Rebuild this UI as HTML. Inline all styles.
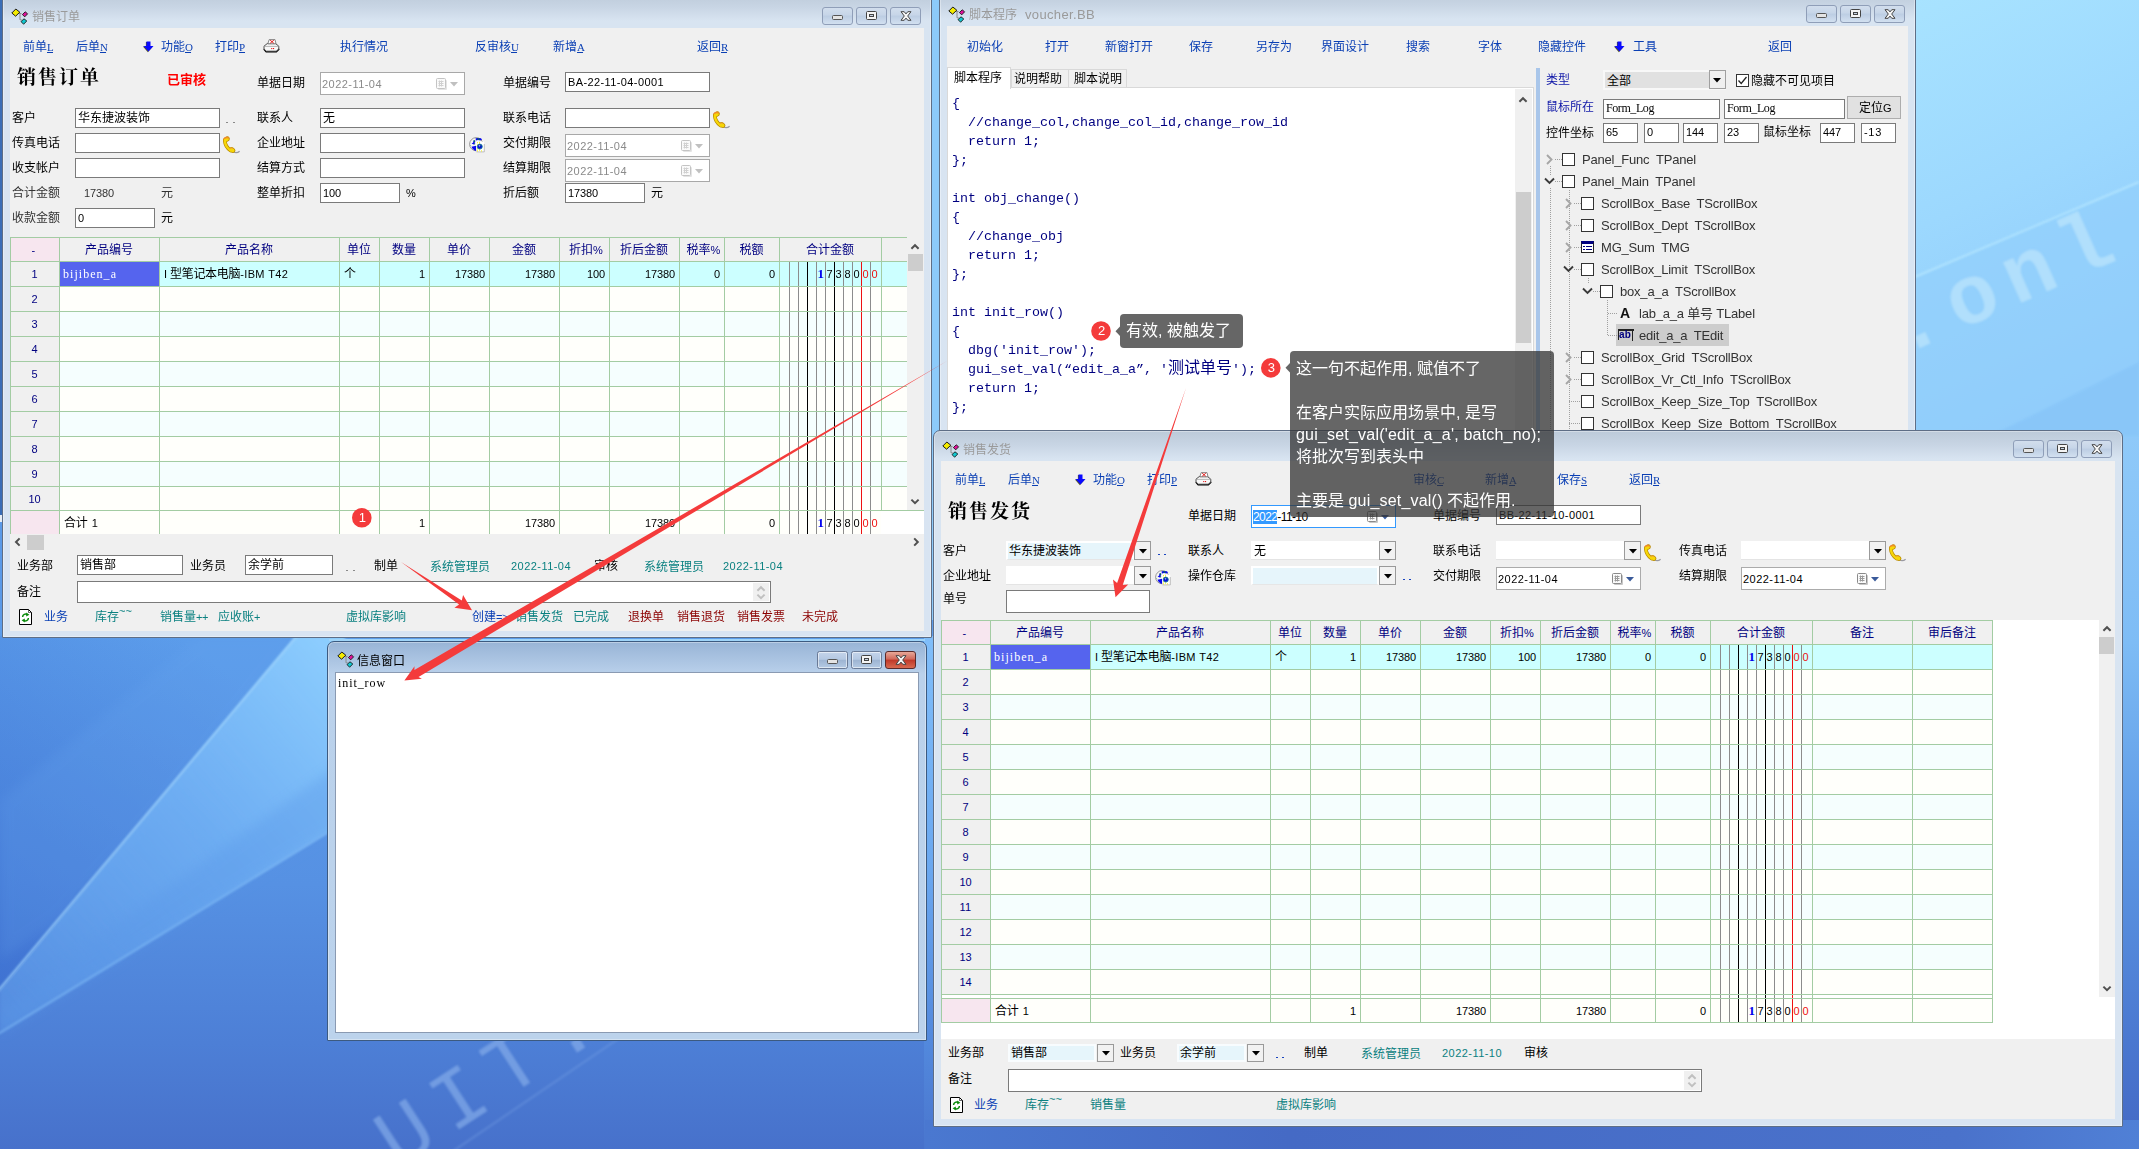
<!DOCTYPE html><html lang="zh"><head><meta charset="utf-8"><title>desktop</title><style>
*{box-sizing:border-box;margin:0;padding:0}
html,body{width:2139px;height:1149px;overflow:hidden}
body{position:relative;font-family:"Liberation Sans","Noto Sans CJK SC",sans-serif;font-size:12px;color:#000;
 background:#5b98e6}
div,svg,span.a{position:absolute}
.t{white-space:nowrap;font-size:12px}
.b{color:#0a3fb4}           /* toolbar blue */
.lb{color:#1018a8}
.n{color:#000080}           /* navy */
.g{color:#0a8080}           /* teal */
.r{color:#8b0000}           /* dark red */
.gy{color:#9a9a9a}
.in{background:#fff;border:1px solid #7a7a7a}
.din{background:#fff;border:1px solid #a0a0a0}
.cb{background:#fff}
.cbb{background:#f2f2f2;border:1px solid #a8a8a8}
.hl{background:#a3cca3;height:1px}
.vl{background:#a3cca3;width:1px}
.mono{font-family:"Liberation Mono","Noto Sans CJK SC",monospace}
.ser{font-family:"Liberation Serif","Noto Serif CJK SC",serif}
.seg{font-family:"Liberation Sans","Noto Sans CJK SC",sans-serif;font-size:13px;color:#333;letter-spacing:-0.2px}
.wbtn{border:1px solid #8c9bb4;border-radius:3px;background:linear-gradient(#d6e2f0,#c3d2e6 45%,#b9cbe2 50%,#cfdff0)}
</style></head><body>
<svg width="2139" height="1149" viewBox="0 0 2139 1149" style="left:0;top:0">
<defs>
<linearGradient id="bgl" x1="0" y1="0" x2="0" y2="1">
<stop offset="0" stop-color="#5c9deb"/><stop offset="0.5" stop-color="#5691e3"/><stop offset="0.8" stop-color="#4d7fd6"/><stop offset="1" stop-color="#4771cb"/>
</linearGradient>
<linearGradient id="dk" x1="0.6" y1="0" x2="0" y2="1">
<stop offset="0" stop-color="#3466cc" stop-opacity="0"/><stop offset="1" stop-color="#3466cc" stop-opacity="0.6"/>
</linearGradient>
<linearGradient id="wedge" x1="1" y1="0" x2="0" y2="1">
<stop offset="0" stop-color="#8fd0ff" stop-opacity="1"/><stop offset="0.45" stop-color="#74b4f6" stop-opacity="0.75"/><stop offset="1" stop-color="#62a2ee" stop-opacity="0.3"/>
</linearGradient>
<linearGradient id="rs" x1="0" y1="0" x2="0" y2="1">
<stop offset="0" stop-color="#90caf9"/><stop offset="0.3" stop-color="#7ebcf5"/><stop offset="0.55" stop-color="#5f9be6"/><stop offset="0.85" stop-color="#4a78d0"/><stop offset="1" stop-color="#4468c4"/>
</linearGradient>
<linearGradient id="ms" x1="0" y1="0" x2="0" y2="1"><stop offset="0" stop-color="#80befa"/><stop offset="0.45" stop-color="#6aa8f0"/><stop offset="0.8" stop-color="#5288dc"/><stop offset="1" stop-color="#4a76ce"/></linearGradient>
<linearGradient id="rt" x1="0" y1="0" x2="0.25" y2="1">
<stop offset="0" stop-color="#a8e3ff"/><stop offset="0.5" stop-color="#9cd8fe"/><stop offset="1" stop-color="#8dc9fa"/>
</linearGradient>
<linearGradient id="bs" x1="0" y1="0" x2="1" y2="0">
<stop offset="0" stop-color="#4a78d0"/><stop offset="0.3" stop-color="#456ac5"/><stop offset="0.85" stop-color="#4a72cb"/><stop offset="1" stop-color="#5080d6"/>
</linearGradient>
<filter id="b6" x="-20%" y="-20%" width="140%" height="140%"><feGaussianBlur stdDeviation="6"/></filter>
<filter id="b2" x="-20%" y="-20%" width="140%" height="140%"><feGaussianBlur stdDeviation="1.6"/></filter>
<filter id="b1"><feGaussianBlur stdDeviation="1.2"/></filter>
</defs>
<rect width="2139" height="1149" fill="#5b98e6"/>
<rect x="0" y="0" width="2139" height="640" fill="#8ccafa"/>
<rect x="0" y="0" width="4" height="515" fill="#3a6db6"/><rect x="0" y="515" width="4" height="7" fill="#e6edf5"/><rect x="0" y="522" width="4" height="118" fill="#5a9ae8"/>
<rect x="0" y="620" width="945" height="529" fill="url(#bgl)"/>
<polygon points="0,636 297,636 0,991" fill="url(#dk)"/>
<polygon points="200,636 300,636 170,800 60,920 0,960 0,800" fill="#6aa8f0" opacity="0.18" filter="url(#b6)"/>
<polygon points="296,636 345,636 345,822 0,1034 0,990" fill="url(#wedge)" filter="url(#b2)"/>
<polygon points="345,760 345,822 0,1034 0,1010" fill="#5a98e8" opacity="0.35" filter="url(#b6)"/>
<line x1="297" y1="636" x2="-2" y2="991" stroke="#a8dcff" stroke-width="2" opacity="0.75" filter="url(#b1)"/>
<line x1="345" y1="822" x2="-2" y2="1034" stroke="#8cc6fb" stroke-width="2" opacity="0.5" filter="url(#b1)"/>
<rect x="2118" y="425" width="21" height="724" fill="url(#rs)"/>
<rect x="924" y="636" width="12" height="513" fill="url(#ms)"/>
<rect x="925" y="1120" width="1214" height="29" fill="url(#bs)"/>
<rect x="1910" y="0" width="229" height="436" fill="url(#rt)"/>
<polygon points="1910,279 2139,182 2139,436 1910,436" fill="#93d0fc" opacity="0.7" filter="url(#b1)"/>
<polygon points="1990,436 2139,362 2139,436" fill="#86c4f8" opacity="0.7" filter="url(#b1)"/>
<line x1="1910" y1="279" x2="2139" y2="182" stroke="#b8e8ff" stroke-width="2" opacity="0.8" filter="url(#b1)"/>
<line x1="640" y1="1024" x2="440" y2="1160" stroke="#86aeea" stroke-width="2.5" opacity="0.25" filter="url(#b1)"/>
<g filter="url(#b1)" font-family="Liberation Mono,monospace" font-weight="bold">
<text x="0" y="0" transform="translate(1902,356) rotate(-24)" font-size="84" fill="#c4e8fc" opacity="0.62" letter-spacing="12">.onl y</text>
<text x="0" y="0" transform="translate(398,1169) rotate(-33)" font-size="84" font-weight="normal" fill="#84ace8" opacity="0.7" letter-spacing="14">UIT.</text>
</g>
</svg>
<div style="left:2px;top:-8px;width:930px;height:646px;z-index:1;background:linear-gradient(#bccad9,#c8d5e4 14px,#d8e4f1 28px,#d8e4f2);border:1px solid #5e6e86;border-radius:7px 7px 1px 1px;box-shadow:0 0 0 1px rgba(255,255,255,.35) inset"></div>
<div id="w1" style="left:0;top:0;width:2139px;height:1149px;z-index:2">
<div style="left:10px;top:28px;width:914px;height:603px;background:#f0f0f0"></div>
<svg style="left:11px;top:8px" width="18" height="18" viewBox="0 0 18 18">
<path d="M8 5.5 H10.5 M9 5.5 V11.8 H10.6" fill="none" stroke="#8a8a8a" stroke-width="1"/>
<path d="M0.8 5 L4.8 1 L8.8 4.2 L4.6 8.2Z" fill="#f4ec00" stroke="#1a1a1a" stroke-width="1"/>
<path d="M11.4 6.6 L14.2 3.8 L16.6 5.8 L13.8 8.8Z" fill="#e0109a" stroke="#1a1a1a" stroke-width="0.9"/>
<path d="M10 13.6 L13 10.8 L15.8 13 L12.6 16.2Z" fill="#10c8d0" stroke="#1a1a1a" stroke-width="0.9"/>
</svg>
<div class="t gy" style="left:32px;top:8.5px;line-height:16px;font-size:12px">销售订单</div>
<div style="left:822px;top:7px;width:31px;height:18px;border:1px solid #8f9eb8;border-radius:3px;background:linear-gradient(#d2deed,#c6d5e8 45%,#bccde3 50%,#d2e0f0)"><div style="left:9px;top:7px;width:11px;height:5px;border:1px solid #555;border-radius:1.5px;background:#e4e4e4"></div></div>
<div style="left:856px;top:7px;width:31px;height:18px;border:1px solid #8f9eb8;border-radius:3px;background:linear-gradient(#d2deed,#c6d5e8 45%,#bccde3 50%,#d2e0f0)"><div style="left:9px;top:3px;width:11px;height:9px;border:1px solid #444;border-radius:1.5px;background:#f4f4f4"></div><div style="left:12px;top:6px;width:5px;height:3px;border:1px solid #444;background:#c8d4e4"></div></div>
<div style="left:890px;top:7px;width:31px;height:18px;border:1px solid #8f9eb8;border-radius:3px;background:linear-gradient(#d2deed,#c6d5e8 45%,#bccde3 50%,#d2e0f0)"><svg style="left:9px;top:3px" width="12" height="10" viewBox="0 0 12 10"><path d="M1 0.7 L4.2 0.7 L6 2.9 L7.8 0.7 L11 0.7 L7.7 5 L11 9.3 L7.8 9.3 L6 7.1 L4.2 9.3 L1 9.3 L4.3 5Z" fill="#f6f6f6" stroke="#444" stroke-width="1"/></svg></div>
<div class="t b" style="left:23px;top:38.5px;line-height:16px;">前单<u class="ser" style="font-size:11px"><span style="letter-spacing:-0.72px">L</span></u></div>
<div class="t b" style="left:76px;top:38.5px;line-height:16px;">后单<u class="ser" style="font-size:11px"><span style="letter-spacing:-1.94px">N</span></u></div>
<div class="t b" style="left:161px;top:38.5px;line-height:16px;">功能<u class="ser" style="font-size:11px"><span style="letter-spacing:-1.94px">O</span></u></div>
<div class="t b" style="left:215px;top:38.5px;line-height:16px;">打印<u class="ser" style="font-size:11px"><span style="letter-spacing:-0.12px">P</span></u></div>
<div class="t b" style="left:340px;top:38.5px;line-height:16px;">执行情况</div>
<div class="t b" style="left:475px;top:38.5px;line-height:16px;">反审核<u class="ser" style="font-size:11px"><span style="letter-spacing:-1.94px">U</span></u></div>
<div class="t b" style="left:553px;top:38.5px;line-height:16px;">新增<u class="ser" style="font-size:11px"><span style="letter-spacing:-1.94px">A</span></u></div>
<div class="t b" style="left:697px;top:38.5px;line-height:16px;">返回<u class="ser" style="font-size:11px"><span style="letter-spacing:-1.34px">R</span></u></div>
<svg style="left:142px;top:41px" width="12" height="13" viewBox="-1 0 12 13"><path d="M3.5 0.5 H7.5 V5 H10.5 L5.5 10.6 L0.5 5 H3.5Z" fill="#55552a" transform="translate(-0.6,0.6)"/><path d="M3.5 0.5 H7.5 V5 H10.5 L5.5 10.6 L0.5 5 H3.5Z" fill="#0a0aff"/></svg>
<svg style="left:263px;top:39px" width="17" height="14" viewBox="0 0 17 14">
<path d="M1 9.8 L3.4 12.6 H13.2 L16 9.8" fill="none" stroke="#000" stroke-width="2" stroke-linejoin="round"/>
<path d="M4.2 4.6 H12.6 L15.8 7.2 V10 L13.2 12.2 H3.4 L1 10 V7.2Z" fill="#f8f8f8" stroke="#3a3a3a" stroke-width="0.9" stroke-linejoin="round"/>
<path d="M1.4 7.4 H15.4" stroke="#9a9a9a" stroke-width="0.7"/>
<path d="M6.2 0.6 H12 L13 4.8 H4.8Z" fill="#fff" stroke="#6a6a6a" stroke-width="0.8"/>
<path d="M7.2 1.2 L10.8 4.2 M10.8 1.2 L7.2 4.2" stroke="#e01818" stroke-width="1"/>
<rect x="8.2" y="9" width="1.1" height="1.1" fill="#e01818"/><rect x="10" y="9" width="1.1" height="1.1" fill="#e01818"/>
</svg>
<div class="t ser" style="left:17px;top:65px;line-height:26px;font-size:19px;font-weight:bold;letter-spacing:2px">销售订单</div>
<div class="t" style="left:167px;top:72px;line-height:16px;color:#f00;font-weight:bold;font-size:13px">已审核</div>
<div class="t" style="left:12px;top:110px;line-height:16px;color:#000">客户</div>
<div class="t" style="left:12px;top:135px;line-height:16px;color:#000">传真电话</div>
<div class="t" style="left:12px;top:160px;line-height:16px;color:#000">收支帐户</div>
<div class="t" style="left:12px;top:185px;line-height:16px;color:#333">合计金额</div>
<div class="t" style="left:12px;top:210px;line-height:16px;color:#333">收款金额</div>
<div class="t" style="left:257px;top:75px;line-height:16px;">单据日期</div>
<div class="t" style="left:257px;top:110px;line-height:16px;">联系人</div>
<div class="t" style="left:257px;top:135px;line-height:16px;">企业地址</div>
<div class="t" style="left:257px;top:160px;line-height:16px;">结算方式</div>
<div class="t" style="left:257px;top:185px;line-height:16px;">整单折扣</div>
<div class="t" style="left:503px;top:75px;line-height:16px;">单据编号</div>
<div class="t" style="left:503px;top:110px;line-height:16px;">联系电话</div>
<div class="t" style="left:503px;top:135px;line-height:16px;">交付期限</div>
<div class="t" style="left:503px;top:160px;line-height:16px;">结算期限</div>
<div class="t" style="left:503px;top:185px;line-height:16px;">折后额</div>
<div class="in" style="left:75px;top:108px;width:145px;height:20px;"></div>
<div class="t" style="left:78px;top:110px;line-height:16px;">华东捷波装饰</div>
<div class="in" style="left:75px;top:133px;width:145px;height:20px;"></div>
<div class="in" style="left:75px;top:158px;width:145px;height:20px;"></div>
<div class="t" style="left:84px;top:185px;line-height:16px;color:#333;letter-spacing:-0.6px"><span style="font-size:11px;letter-spacing:-0.12px">17380</span></div>
<div class="t" style="left:161px;top:185px;line-height:16px;color:#333">元</div>
<div class="in" style="left:75px;top:208px;width:80px;height:20px;"></div>
<div class="t" style="left:78px;top:210px;line-height:16px;"><span style="font-size:11px;letter-spacing:-0.12px">0</span></div>
<div class="t" style="left:161px;top:210px;line-height:16px;">元</div>
<div style="left:226px;top:122px;width:2px;height:1px;background:#8a8a8a"></div>
<div style="left:233px;top:122px;width:2px;height:1px;background:#8a8a8a"></div>
<svg style="left:222px;top:135.5px" width="19" height="18" viewBox="0 0 19 18">
<path d="M11.5 16 Q14.8 17.8 17.6 15.2" fill="none" stroke="#9a9aa2" stroke-width="1.2"/>
<path d="M2.8 5 Q3.2 10.5 8.6 14.6" fill="none" stroke="#b88a00" stroke-width="3.6" stroke-linecap="round"/>
<ellipse cx="4.4" cy="3.4" rx="3.5" ry="2.6" transform="rotate(-32 4.4 3.4)" fill="#b88a00"/>
<ellipse cx="10.2" cy="14" rx="3.3" ry="2.6" transform="rotate(38 10.2 14)" fill="#b88a00"/>
<path d="M2.8 5 Q3.2 10.5 8.6 14.6" fill="none" stroke="#f7d708" stroke-width="2.3" stroke-linecap="round"/>
<ellipse cx="4.4" cy="3.4" rx="2.8" ry="1.9" transform="rotate(-32 4.4 3.4)" fill="#f7d708"/>
<ellipse cx="10.2" cy="14" rx="2.6" ry="1.9" transform="rotate(38 10.2 14)" fill="#f7d708"/>
<path d="M2.2 2.6 Q4.4 0.8 6.6 2" fill="none" stroke="#f08a28" stroke-width="1.3" stroke-linecap="round"/>
<path d="M8.2 12.2 Q9.6 11.6 10.8 12.4" fill="none" stroke="#f0a030" stroke-width="1" stroke-linecap="round"/>
</svg>
<div style="left:320px;top:72px;width:145px;height:23px;background:#fff;border:1px solid #a8a8a8"></div>
<div class="t" style="left:322px;top:75.5px;line-height:16px;color:#8a8a8a;letter-spacing:-0.6px"><span style="font-size:11px;letter-spacing:0.45px">2022-11-04</span></div>
<svg style="left:436px;top:77.5px" width="12" height="13" viewBox="0 0 12 13"><rect x="2" y="2" width="9" height="10" rx="1" fill="#e4e4e4"/><rect x="0.5" y="0.5" width="9" height="10" rx="1" fill="#fafafa" stroke="#c4c4c4"/><path d="M2.5 3.5 H7.5 M2.5 5.5 H7.5 M2.5 7.5 H7.5 M3.5 2.5 V8.5 M5.5 2.5 V8.5" stroke="#d0d0d0" stroke-width="1" fill="none"/></svg>
<svg style="left:450px;top:81.5px" width="8" height="5"><path d="M0 0 H8 L4 4.5Z" fill="#c0c0c0"/></svg>
<div class="in" style="left:320px;top:108px;width:145px;height:20px;"></div>
<div class="t" style="left:323px;top:110px;line-height:16px;">无</div>
<div class="in" style="left:320px;top:133px;width:145px;height:20px;"></div>
<div class="in" style="left:320px;top:158px;width:145px;height:20px;"></div>
<div class="in" style="left:320px;top:183px;width:80px;height:20px;"></div>
<div class="t" style="left:323px;top:185px;line-height:16px;"><span style="font-size:11px;letter-spacing:-0.12px">100</span></div>
<div class="t" style="left:406px;top:185px;line-height:16px;"><span style="font-size:11px;letter-spacing:-3.78px">%</span></div>
<svg style="left:469px;top:137px" width="16" height="16" viewBox="0 0 16 16">
<circle cx="7.2" cy="7.2" r="6.6" fill="#f6f6f6" stroke="#8c8c8c" stroke-width="0.9"/>
<path d="M6.5 1.6 L8 0.9 L12 1.2 L13 2.8 L11.5 3.6 L9 3 L7 3.4Z" fill="#0a0aee"/>
<path d="M8.2 1.6 L10.6 1.4 L10.2 2.8 L8.6 2.6Z" fill="#0a8a2a"/>
<path d="M4.4 3.6 L6.2 3.2 L6.2 5 L5.4 6.2 L6.2 7 L4.6 7.4 L2.6 6.6 L4.2 5.6Z" fill="#0a0aee"/>
<path d="M4.6 3.6 L6 3.4 L6 4.8 L4.8 5Z M5.2 6.4 L6.2 6.4 L6 7.2 L5 7.2Z" fill="#0a8a2a"/>
<path d="M1.2 8.2 L2.2 8.6 L1.8 9.2Z" fill="#109090"/>
<path d="M2.4 9.8 L7.2 8.8 L7.2 14 L5.6 13.6 L3.6 11.8Z" fill="#0a0aee"/>
<rect x="7.4" y="4.6" width="7.8" height="10.2" fill="#ffffff"/>
<path d="M7.4 14.9 H15.3 V7" fill="none" stroke="#b0b0b0" stroke-width="0.8"/>
<g fill="#f6f000"><rect x="8" y="5.2" width="1" height="1"/><rect x="10" y="4.8" width="1" height="1"/><rect x="10" y="6.4" width="1" height="1"/><rect x="8" y="7.4" width="1" height="1"/><rect x="8" y="11.4" width="1" height="1"/><rect x="8" y="13.4" width="1" height="1"/><rect x="10" y="12.6" width="1" height="1"/><rect x="12" y="13.4" width="1" height="1"/></g>
<circle cx="10.8" cy="9.6" r="2.5" fill="#0a0ae0" stroke="#108888" stroke-width="0.8"/>
<path d="M9.6 8.6 L11.4 8.2 L10.4 9.8Z" fill="#f4f4f4"/><path d="M10.6 9.4 L12 8.2 L12.2 9Z" fill="#0a8a2a"/>
</svg>
<div class="in" style="left:565px;top:72px;width:145px;height:20px;"></div>
<div class="t" style="left:568px;top:74px;line-height:16px;"><span style="font-size:11px;letter-spacing:0.39px">BA-22-11-04-0001</span></div>
<div class="in" style="left:565px;top:108px;width:145px;height:20px;"></div>
<svg style="left:712px;top:110.5px" width="19" height="18" viewBox="0 0 19 18">
<path d="M11.5 16 Q14.8 17.8 17.6 15.2" fill="none" stroke="#9a9aa2" stroke-width="1.2"/>
<path d="M2.8 5 Q3.2 10.5 8.6 14.6" fill="none" stroke="#b88a00" stroke-width="3.6" stroke-linecap="round"/>
<ellipse cx="4.4" cy="3.4" rx="3.5" ry="2.6" transform="rotate(-32 4.4 3.4)" fill="#b88a00"/>
<ellipse cx="10.2" cy="14" rx="3.3" ry="2.6" transform="rotate(38 10.2 14)" fill="#b88a00"/>
<path d="M2.8 5 Q3.2 10.5 8.6 14.6" fill="none" stroke="#f7d708" stroke-width="2.3" stroke-linecap="round"/>
<ellipse cx="4.4" cy="3.4" rx="2.8" ry="1.9" transform="rotate(-32 4.4 3.4)" fill="#f7d708"/>
<ellipse cx="10.2" cy="14" rx="2.6" ry="1.9" transform="rotate(38 10.2 14)" fill="#f7d708"/>
<path d="M2.2 2.6 Q4.4 0.8 6.6 2" fill="none" stroke="#f08a28" stroke-width="1.3" stroke-linecap="round"/>
<path d="M8.2 12.2 Q9.6 11.6 10.8 12.4" fill="none" stroke="#f0a030" stroke-width="1" stroke-linecap="round"/>
</svg>
<div style="left:565px;top:134px;width:145px;height:23px;background:#fff;border:1px solid #a8a8a8"></div>
<div class="t" style="left:567px;top:137.5px;line-height:16px;color:#8a8a8a;letter-spacing:-0.6px"><span style="font-size:11px;letter-spacing:0.45px">2022-11-04</span></div>
<svg style="left:681px;top:139.5px" width="12" height="13" viewBox="0 0 12 13"><rect x="2" y="2" width="9" height="10" rx="1" fill="#e4e4e4"/><rect x="0.5" y="0.5" width="9" height="10" rx="1" fill="#fafafa" stroke="#c4c4c4"/><path d="M2.5 3.5 H7.5 M2.5 5.5 H7.5 M2.5 7.5 H7.5 M3.5 2.5 V8.5 M5.5 2.5 V8.5" stroke="#d0d0d0" stroke-width="1" fill="none"/></svg>
<svg style="left:695px;top:143.5px" width="8" height="5"><path d="M0 0 H8 L4 4.5Z" fill="#c0c0c0"/></svg>
<div style="left:565px;top:159px;width:145px;height:23px;background:#fff;border:1px solid #a8a8a8"></div>
<div class="t" style="left:567px;top:162.5px;line-height:16px;color:#8a8a8a;letter-spacing:-0.6px"><span style="font-size:11px;letter-spacing:0.45px">2022-11-04</span></div>
<svg style="left:681px;top:164.5px" width="12" height="13" viewBox="0 0 12 13"><rect x="2" y="2" width="9" height="10" rx="1" fill="#e4e4e4"/><rect x="0.5" y="0.5" width="9" height="10" rx="1" fill="#fafafa" stroke="#c4c4c4"/><path d="M2.5 3.5 H7.5 M2.5 5.5 H7.5 M2.5 7.5 H7.5 M3.5 2.5 V8.5 M5.5 2.5 V8.5" stroke="#d0d0d0" stroke-width="1" fill="none"/></svg>
<svg style="left:695px;top:168.5px" width="8" height="5"><path d="M0 0 H8 L4 4.5Z" fill="#c0c0c0"/></svg>
<div class="in" style="left:565px;top:183px;width:80px;height:20px;"></div>
<div class="t" style="left:568px;top:185px;line-height:16px;"><span style="font-size:11px;letter-spacing:-0.12px">17380</span></div>
<div class="t" style="left:651px;top:185px;line-height:16px;">元</div>
<div style="left:10px;top:228px;width:914px;height:324px;background:#f0f0f0"></div>
<div style="left:10px;top:237px;width:897px;height:24px;background:#f0f0f0"></div>
<div style="left:10px;top:237px;width:49px;height:24px;background:#f7e6ef"></div>
<div style="left:59px;top:261px;width:848px;height:25px;background:#ccffff"></div>
<div style="left:10px;top:261px;width:49px;height:25px;background:#f0f0f0"></div>
<div class="t n" style="left:10px;top:266px;line-height:16px;width:49px;text-align:center;letter-spacing:-0.5px"><span style="font-size:11px;letter-spacing:-0.12px">1</span></div>
<div style="left:59px;top:286px;width:848px;height:25px;background:#fffffb"></div>
<div style="left:10px;top:286px;width:49px;height:25px;background:#f0f0f0"></div>
<div class="t n" style="left:10px;top:291px;line-height:16px;width:49px;text-align:center;letter-spacing:-0.5px"><span style="font-size:11px;letter-spacing:-0.12px">2</span></div>
<div style="left:59px;top:311px;width:848px;height:25px;background:#f5fefe"></div>
<div style="left:10px;top:311px;width:49px;height:25px;background:#f0f0f0"></div>
<div class="t n" style="left:10px;top:316px;line-height:16px;width:49px;text-align:center;letter-spacing:-0.5px"><span style="font-size:11px;letter-spacing:-0.12px">3</span></div>
<div style="left:59px;top:336px;width:848px;height:25px;background:#fffffb"></div>
<div style="left:10px;top:336px;width:49px;height:25px;background:#f0f0f0"></div>
<div class="t n" style="left:10px;top:341px;line-height:16px;width:49px;text-align:center;letter-spacing:-0.5px"><span style="font-size:11px;letter-spacing:-0.12px">4</span></div>
<div style="left:59px;top:361px;width:848px;height:25px;background:#f5fefe"></div>
<div style="left:10px;top:361px;width:49px;height:25px;background:#f0f0f0"></div>
<div class="t n" style="left:10px;top:366px;line-height:16px;width:49px;text-align:center;letter-spacing:-0.5px"><span style="font-size:11px;letter-spacing:-0.12px">5</span></div>
<div style="left:59px;top:386px;width:848px;height:25px;background:#fffffb"></div>
<div style="left:10px;top:386px;width:49px;height:25px;background:#f0f0f0"></div>
<div class="t n" style="left:10px;top:391px;line-height:16px;width:49px;text-align:center;letter-spacing:-0.5px"><span style="font-size:11px;letter-spacing:-0.12px">6</span></div>
<div style="left:59px;top:411px;width:848px;height:25px;background:#f5fefe"></div>
<div style="left:10px;top:411px;width:49px;height:25px;background:#f0f0f0"></div>
<div class="t n" style="left:10px;top:416px;line-height:16px;width:49px;text-align:center;letter-spacing:-0.5px"><span style="font-size:11px;letter-spacing:-0.12px">7</span></div>
<div style="left:59px;top:436px;width:848px;height:25px;background:#fffffb"></div>
<div style="left:10px;top:436px;width:49px;height:25px;background:#f0f0f0"></div>
<div class="t n" style="left:10px;top:441px;line-height:16px;width:49px;text-align:center;letter-spacing:-0.5px"><span style="font-size:11px;letter-spacing:-0.12px">8</span></div>
<div style="left:59px;top:461px;width:848px;height:25px;background:#f5fefe"></div>
<div style="left:10px;top:461px;width:49px;height:25px;background:#f0f0f0"></div>
<div class="t n" style="left:10px;top:466px;line-height:16px;width:49px;text-align:center;letter-spacing:-0.5px"><span style="font-size:11px;letter-spacing:-0.12px">9</span></div>
<div style="left:59px;top:486px;width:848px;height:25px;background:#fffffb"></div>
<div style="left:10px;top:486px;width:49px;height:25px;background:#f0f0f0"></div>
<div class="t n" style="left:10px;top:491px;line-height:16px;width:49px;text-align:center;letter-spacing:-0.5px"><span style="font-size:11px;letter-spacing:-0.12px">10</span></div>
<div style="left:59px;top:510px;width:848px;height:24px;background:#fffffb"></div>
<div style="left:10px;top:510px;width:49px;height:24px;background:#f7e6ef"></div>
<div style="left:60px;top:262px;width:99px;height:24px;background:#5564ee"></div>
<div class="t n" style="left:10px;top:241.5px;line-height:16px;width:49px;text-align:center;"><span style="font-size:11px;letter-spacing:2.34px">-</span></div>
<div class="t n" style="left:59px;top:241.5px;line-height:16px;width:100px;text-align:center;">产品编号</div>
<div class="t n" style="left:159px;top:241.5px;line-height:16px;width:180px;text-align:center;">产品名称</div>
<div class="t n" style="left:339px;top:241.5px;line-height:16px;width:40px;text-align:center;">单位</div>
<div class="t n" style="left:379px;top:241.5px;line-height:16px;width:50px;text-align:center;">数量</div>
<div class="t n" style="left:429px;top:241.5px;line-height:16px;width:60px;text-align:center;">单价</div>
<div class="t n" style="left:489px;top:241.5px;line-height:16px;width:70px;text-align:center;">金额</div>
<div class="t n" style="left:559px;top:241.5px;line-height:16px;width:50px;text-align:center;">折扣<span style="font-size:11px;letter-spacing:-3.78px">%</span></div>
<div class="t n" style="left:609px;top:241.5px;line-height:16px;width:70px;text-align:center;">折后金额</div>
<div class="t n" style="left:679px;top:241.5px;line-height:16px;width:45px;text-align:center;">税率<span style="font-size:11px;letter-spacing:-3.78px">%</span></div>
<div class="t n" style="left:724px;top:241.5px;line-height:16px;width:55px;text-align:center;">税额</div>
<div class="t n" style="left:779px;top:241.5px;line-height:16px;width:102px;text-align:center;">合计金额</div>
<div style="left:789px;top:261px;width:1px;height:250px;background:#8c8c8c"></div>
<div style="left:789px;top:510px;width:1px;height:24px;background:#8c8c8c"></div>
<div style="left:798px;top:261px;width:1px;height:250px;background:#8c8c8c"></div>
<div style="left:798px;top:510px;width:1px;height:24px;background:#8c8c8c"></div>
<div style="left:807px;top:261px;width:1px;height:250px;background:#000"></div>
<div style="left:807px;top:510px;width:1px;height:24px;background:#000"></div>
<div style="left:816px;top:261px;width:1px;height:250px;background:#8c8c8c"></div>
<div style="left:816px;top:510px;width:1px;height:24px;background:#8c8c8c"></div>
<div style="left:825px;top:261px;width:1px;height:250px;background:#8c8c8c"></div>
<div style="left:825px;top:510px;width:1px;height:24px;background:#8c8c8c"></div>
<div style="left:834px;top:261px;width:1px;height:250px;background:#000"></div>
<div style="left:834px;top:510px;width:1px;height:24px;background:#000"></div>
<div style="left:843px;top:261px;width:1px;height:250px;background:#8c8c8c"></div>
<div style="left:843px;top:510px;width:1px;height:24px;background:#8c8c8c"></div>
<div style="left:852px;top:261px;width:1px;height:250px;background:#8c8c8c"></div>
<div style="left:852px;top:510px;width:1px;height:24px;background:#8c8c8c"></div>
<div style="left:861px;top:261px;width:1px;height:250px;background:#ee1111"></div>
<div style="left:861px;top:510px;width:1px;height:24px;background:#ee1111"></div>
<div style="left:870px;top:261px;width:1px;height:250px;background:#8c8c8c"></div>
<div style="left:870px;top:510px;width:1px;height:24px;background:#8c8c8c"></div>
<div class="hl" style="left:10px;top:237px;width:897px"></div>
<div class="hl" style="left:10px;top:261px;width:897px"></div>
<div class="hl" style="left:10px;top:286px;width:897px"></div>
<div class="hl" style="left:10px;top:311px;width:897px"></div>
<div class="hl" style="left:10px;top:336px;width:897px"></div>
<div class="hl" style="left:10px;top:361px;width:897px"></div>
<div class="hl" style="left:10px;top:386px;width:897px"></div>
<div class="hl" style="left:10px;top:411px;width:897px"></div>
<div class="hl" style="left:10px;top:436px;width:897px"></div>
<div class="hl" style="left:10px;top:461px;width:897px"></div>
<div class="hl" style="left:10px;top:486px;width:897px"></div>
<div class="hl" style="left:10px;top:510px;width:897px"></div>
<div class="vl" style="left:10px;top:237px;height:297px"></div>
<div class="vl" style="left:59px;top:237px;height:297px"></div>
<div class="vl" style="left:159px;top:237px;height:297px"></div>
<div class="vl" style="left:339px;top:237px;height:297px"></div>
<div class="vl" style="left:379px;top:237px;height:297px"></div>
<div class="vl" style="left:429px;top:237px;height:297px"></div>
<div class="vl" style="left:489px;top:237px;height:297px"></div>
<div class="vl" style="left:559px;top:237px;height:297px"></div>
<div class="vl" style="left:609px;top:237px;height:297px"></div>
<div class="vl" style="left:679px;top:237px;height:297px"></div>
<div class="vl" style="left:724px;top:237px;height:297px"></div>
<div class="vl" style="left:779px;top:237px;height:297px"></div>
<div class="vl" style="left:881px;top:237px;height:297px"></div>
<div class="t ser" style="left:63px;top:266px;line-height:16px;color:#fff;letter-spacing:0.35px;font-size:12px"><span style="letter-spacing:1.04px">bijiben_a</span></div>
<div class="t" style="left:164px;top:266px;line-height:16px;letter-spacing:-0.3px"><span style="font-size:11px;letter-spacing:2.94px">I</span>型笔记本电脑<span style="font-size:11px;letter-spacing:0.37px">-IBM T42</span></div>
<div class="t" style="left:344px;top:266px;line-height:16px;letter-spacing:-0.3px">个</div>
<div class="t" style="left:379px;top:266px;line-height:16px;width:50px;text-align:right;letter-spacing:-0.6px;padding-right:4px"><span style="font-size:11px;letter-spacing:-0.12px">1</span></div>
<div class="t" style="left:429px;top:266px;line-height:16px;width:60px;text-align:right;letter-spacing:-0.6px;padding-right:4px"><span style="font-size:11px;letter-spacing:-0.12px">17380</span></div>
<div class="t" style="left:489px;top:266px;line-height:16px;width:70px;text-align:right;letter-spacing:-0.6px;padding-right:4px"><span style="font-size:11px;letter-spacing:-0.12px">17380</span></div>
<div class="t" style="left:559px;top:266px;line-height:16px;width:50px;text-align:right;letter-spacing:-0.6px;padding-right:4px"><span style="font-size:11px;letter-spacing:-0.12px">100</span></div>
<div class="t" style="left:609px;top:266px;line-height:16px;width:70px;text-align:right;letter-spacing:-0.6px;padding-right:4px"><span style="font-size:11px;letter-spacing:-0.12px">17380</span></div>
<div class="t" style="left:679px;top:266px;line-height:16px;width:45px;text-align:right;letter-spacing:-0.6px;padding-right:4px"><span style="font-size:11px;letter-spacing:-0.12px">0</span></div>
<div class="t" style="left:724px;top:266px;line-height:16px;width:55px;text-align:right;letter-spacing:-0.6px;padding-right:4px"><span style="font-size:11px;letter-spacing:-0.12px">0</span></div>
<div class="t ser" style="left:816px;top:266px;line-height:16px;width:9px;text-align:center;color:#0000ee;font-weight:bold;font-size:13px"><span style="letter-spacing:-0.50px">1</span></div>
<div class="t" style="left:825px;top:266px;line-height:16px;width:9px;text-align:center;color:#000;font-weight:normal;font-size:12px"><span style="font-size:11px;letter-spacing:-0.12px">7</span></div>
<div class="t" style="left:834px;top:266px;line-height:16px;width:9px;text-align:center;color:#000;font-weight:normal;font-size:12px"><span style="font-size:11px;letter-spacing:-0.12px">3</span></div>
<div class="t" style="left:843px;top:266px;line-height:16px;width:9px;text-align:center;color:#000;font-weight:normal;font-size:12px"><span style="font-size:11px;letter-spacing:-0.12px">8</span></div>
<div class="t" style="left:852px;top:266px;line-height:16px;width:9px;text-align:center;color:#000;font-weight:normal;font-size:12px"><span style="font-size:11px;letter-spacing:-0.12px">0</span></div>
<div class="t" style="left:861px;top:266px;line-height:16px;width:9px;text-align:center;color:#ee1111;font-weight:normal;font-size:12px"><span style="font-size:11px;letter-spacing:-0.12px">0</span></div>
<div class="t" style="left:870px;top:266px;line-height:16px;width:9px;text-align:center;color:#ee1111;font-weight:normal;font-size:12px"><span style="font-size:11px;letter-spacing:-0.12px">0</span></div>
<div class="t" style="left:64px;top:514.5px;line-height:16px;letter-spacing:-0.3px">合计<span style="font-size:11px;letter-spacing:1.41px"> 1</span></div>
<div class="t" style="left:379px;top:514.5px;line-height:16px;width:50px;text-align:right;letter-spacing:-0.6px;padding-right:4px"><span style="font-size:11px;letter-spacing:-0.12px">1</span></div>
<div class="t" style="left:489px;top:514.5px;line-height:16px;width:70px;text-align:right;letter-spacing:-0.6px;padding-right:4px"><span style="font-size:11px;letter-spacing:-0.12px">17380</span></div>
<div class="t" style="left:609px;top:514.5px;line-height:16px;width:70px;text-align:right;letter-spacing:-0.6px;padding-right:4px"><span style="font-size:11px;letter-spacing:-0.12px">17380</span></div>
<div class="t" style="left:724px;top:514.5px;line-height:16px;width:55px;text-align:right;letter-spacing:-0.6px;padding-right:4px"><span style="font-size:11px;letter-spacing:-0.12px">0</span></div>
<div class="t ser" style="left:816px;top:514.5px;line-height:16px;width:9px;text-align:center;color:#0000ee;font-weight:bold;font-size:13px"><span style="letter-spacing:-0.50px">1</span></div>
<div class="t" style="left:825px;top:514.5px;line-height:16px;width:9px;text-align:center;color:#000;font-weight:normal;font-size:12px"><span style="font-size:11px;letter-spacing:-0.12px">7</span></div>
<div class="t" style="left:834px;top:514.5px;line-height:16px;width:9px;text-align:center;color:#000;font-weight:normal;font-size:12px"><span style="font-size:11px;letter-spacing:-0.12px">3</span></div>
<div class="t" style="left:843px;top:514.5px;line-height:16px;width:9px;text-align:center;color:#000;font-weight:normal;font-size:12px"><span style="font-size:11px;letter-spacing:-0.12px">8</span></div>
<div class="t" style="left:852px;top:514.5px;line-height:16px;width:9px;text-align:center;color:#000;font-weight:normal;font-size:12px"><span style="font-size:11px;letter-spacing:-0.12px">0</span></div>
<div class="t" style="left:861px;top:514.5px;line-height:16px;width:9px;text-align:center;color:#ee1111;font-weight:normal;font-size:12px"><span style="font-size:11px;letter-spacing:-0.12px">0</span></div>
<div class="t" style="left:870px;top:514.5px;line-height:16px;width:9px;text-align:center;color:#ee1111;font-weight:normal;font-size:12px"><span style="font-size:11px;letter-spacing:-0.12px">0</span></div>
<div style="left:881px;top:511px;width:43px;height:23px;background:#fff"></div>
<div style="left:881px;top:510px;width:43px;height:1px;background:#a3cca3"></div>
<div style="left:10px;top:534px;width:914px;height:18px;background:#f0f0f0"></div>
<div style="left:907px;top:237px;width:17px;height:273px;background:#f0f0f0"></div>
<svg style="left:910px;top:242px" width="10" height="10"><path d="M1.4 6.8 L5 3.2 L8.6 6.8" fill="none" stroke="#505050" stroke-width="2"/></svg>
<svg style="left:910px;top:497px" width="10" height="10"><path d="M1.4 2.6 L5 6.2 L8.6 2.6" fill="none" stroke="#505050" stroke-width="2"/></svg>
<div style="left:908px;top:254px;width:15px;height:17px;background:#cdcdcd"></div>
<svg style="left:13px;top:537px" width="10" height="10"><path d="M6.6 1.4 L3 5 L6.6 8.6" fill="none" stroke="#505050" stroke-width="2"/></svg>
<svg style="left:911px;top:537px" width="10" height="10"><path d="M3.2 1.4 L6.8 5 L3.2 8.6" fill="none" stroke="#505050" stroke-width="2"/></svg>
<div style="left:27px;top:535px;width:17px;height:15px;background:#cdcdcd"></div>
<div class="t" style="left:17px;top:558px;line-height:16px;">业务部</div>
<div class="in" style="left:77px;top:555px;width:106px;height:20px;"></div>
<div class="t" style="left:80px;top:557px;line-height:16px;">销售部</div>
<div class="t" style="left:190px;top:558px;line-height:16px;">业务员</div>
<div class="in" style="left:245px;top:555px;width:88px;height:20px;"></div>
<div class="t" style="left:248px;top:557px;line-height:16px;">余学前</div>
<div style="left:346px;top:570px;width:2px;height:1px;background:#8a8a8a"></div>
<div style="left:353px;top:570px;width:2px;height:1px;background:#8a8a8a"></div>
<div class="t" style="left:374px;top:558px;line-height:16px;">制单</div>
<div class="t g" style="left:430px;top:558.5px;line-height:16px;">系统管理员</div>
<div class="t g" style="left:511px;top:558px;line-height:16px;"><span style="font-size:11px;letter-spacing:0.45px">2022-11-04</span></div>
<div class="t" style="left:594px;top:558px;line-height:16px;">审核</div>
<div class="t g" style="left:644px;top:558.5px;line-height:16px;">系统管理员</div>
<div class="t g" style="left:723px;top:558px;line-height:16px;"><span style="font-size:11px;letter-spacing:0.45px">2022-11-04</span></div>
<div class="t" style="left:17px;top:584px;line-height:16px;">备注</div>
<div style="left:77px;top:581px;width:694px;height:22px;background:#fff;border:1px solid #7a7a7a"></div>
<div style="left:753px;top:583px;width:16px;height:18px;background:#f0f0f0"></div>
<svg style="left:756px;top:584px" width="10" height="10"><path d="M1.4 6.8 L5 3.2 L8.6 6.8" fill="none" stroke="#c0c0c0" stroke-width="2"/></svg>
<svg style="left:756px;top:592px" width="10" height="10"><path d="M1.4 2.6 L5 6.2 L8.6 2.6" fill="none" stroke="#c0c0c0" stroke-width="2"/></svg>
<svg style="left:19px;top:609px" width="14" height="17" viewBox="0 0 14 17">
<path d="M0.5 0.5 H9.5 L12.5 3.5 V15.5 H0.5Z" fill="#fff" stroke="#000" stroke-width="1"/>
<path d="M9.5 0.5 V3.5 H12.5" fill="none" stroke="#000" stroke-width="0.6"/>
<path d="M3.6 8 A3 3 0 0 1 8.4 5.6 M9.4 9 A3 3 0 0 1 4.6 11.4" fill="none" stroke="#0a8a0a" stroke-width="1.5"/>
<path d="M7.2 3.6 L10.4 5.8 L7.2 7.6Z M5.8 9.4 L2.6 11.2 L5.8 13.4Z" fill="#0a8a0a"/>
</svg>
<div class="t b" style="left:44px;top:608.5px;line-height:16px;">业务</div>
<div class="t g" style="left:95px;top:608.5px;line-height:16px;">库存<span style="position:relative;top:-6px;font-size:11px">~~</span></div>
<div class="t g" style="left:160px;top:608.5px;line-height:16px;">销售量<span style="font-size:11px;letter-spacing:-0.42px">++</span></div>
<div class="t g" style="left:218px;top:608.5px;line-height:16px;">应收账<span style="font-size:11px;letter-spacing:-0.42px">+</span></div>
<div class="t g" style="left:346px;top:608.5px;line-height:16px;">虚拟库影响</div>
<div class="t b" style="left:472px;top:608.5px;line-height:16px;">创建<span style="font-size:11px;letter-spacing:-0.42px">=&gt;</span></div>
<div class="t g" style="left:515px;top:608.5px;line-height:16px;">销售发货</div>
<div class="t g" style="left:573px;top:608.5px;line-height:16px;">已完成</div>
<div class="t r" style="left:628px;top:608.5px;line-height:16px;">退换单</div>
<div class="t r" style="left:677px;top:608.5px;line-height:16px;">销售退货</div>
<div class="t r" style="left:737px;top:608.5px;line-height:16px;">销售发票</div>
<div class="t r" style="left:802px;top:608.5px;line-height:16px;">未完成</div>
</div>
<div style="left:939px;top:-10px;width:977px;height:710px;z-index:3;background:linear-gradient(#bccad9,#c8d5e4 14px,#d8e4f1 28px,#d8e4f2);border:1px solid #5e6e86;border-radius:7px 7px 1px 1px;box-shadow:0 0 0 1px rgba(255,255,255,.35) inset"></div>
<div id="w2" style="left:0;top:0;width:2139px;height:1149px;z-index:4">
<div style="left:947px;top:26px;width:961px;height:614px;background:#f0f0f0"></div>
<svg style="left:948px;top:6px" width="18" height="18" viewBox="0 0 18 18">
<path d="M8 5.5 H10.5 M9 5.5 V11.8 H10.6" fill="none" stroke="#8a8a8a" stroke-width="1"/>
<path d="M0.8 5 L4.8 1 L8.8 4.2 L4.6 8.2Z" fill="#f4ec00" stroke="#1a1a1a" stroke-width="1"/>
<path d="M11.4 6.6 L14.2 3.8 L16.6 5.8 L13.8 8.8Z" fill="#e0109a" stroke="#1a1a1a" stroke-width="0.9"/>
<path d="M10 13.6 L13 10.8 L15.8 13 L12.6 16.2Z" fill="#10c8d0" stroke="#1a1a1a" stroke-width="0.9"/>
</svg>
<div class="t gy" style="left:969px;top:6.5px;line-height:16px;">脚本程序</div>
<div class="t gy" style="left:1025px;top:6.5px;line-height:16px;font-size:13px;letter-spacing:0.35px">voucher.BB</div>
<div style="left:1806px;top:5px;width:31px;height:18px;border:1px solid #8f9eb8;border-radius:3px;background:linear-gradient(#d2deed,#c6d5e8 45%,#bccde3 50%,#d2e0f0)"><div style="left:9px;top:7px;width:11px;height:5px;border:1px solid #555;border-radius:1.5px;background:#e4e4e4"></div></div>
<div style="left:1840px;top:5px;width:31px;height:18px;border:1px solid #8f9eb8;border-radius:3px;background:linear-gradient(#d2deed,#c6d5e8 45%,#bccde3 50%,#d2e0f0)"><div style="left:9px;top:3px;width:11px;height:9px;border:1px solid #444;border-radius:1.5px;background:#f4f4f4"></div><div style="left:12px;top:6px;width:5px;height:3px;border:1px solid #444;background:#c8d4e4"></div></div>
<div style="left:1874px;top:5px;width:31px;height:18px;border:1px solid #8f9eb8;border-radius:3px;background:linear-gradient(#d2deed,#c6d5e8 45%,#bccde3 50%,#d2e0f0)"><svg style="left:9px;top:3px" width="12" height="10" viewBox="0 0 12 10"><path d="M1 0.7 L4.2 0.7 L6 2.9 L7.8 0.7 L11 0.7 L7.7 5 L11 9.3 L7.8 9.3 L6 7.1 L4.2 9.3 L1 9.3 L4.3 5Z" fill="#f6f6f6" stroke="#444" stroke-width="1"/></svg></div>
<div class="t b" style="left:967px;top:38.5px;line-height:16px;">初始化</div>
<div class="t b" style="left:1045px;top:38.5px;line-height:16px;">打开</div>
<div class="t b" style="left:1105px;top:38.5px;line-height:16px;">新窗打开</div>
<div class="t b" style="left:1189px;top:38.5px;line-height:16px;">保存</div>
<div class="t b" style="left:1256px;top:38.5px;line-height:16px;">另存为</div>
<div class="t b" style="left:1321px;top:38.5px;line-height:16px;">界面设计</div>
<div class="t b" style="left:1406px;top:38.5px;line-height:16px;">搜索</div>
<div class="t b" style="left:1478px;top:38.5px;line-height:16px;">字体</div>
<div class="t b" style="left:1538px;top:38.5px;line-height:16px;">隐藏控件</div>
<div class="t b" style="left:1633px;top:38.5px;line-height:16px;">工具</div>
<div class="t b" style="left:1768px;top:38.5px;line-height:16px;">返回</div>
<svg style="left:1613px;top:41px" width="12" height="13" viewBox="-1 0 12 13"><path d="M3.5 0.5 H7.5 V5 H10.5 L5.5 10.6 L0.5 5 H3.5Z" fill="#55552a" transform="translate(-0.6,0.6)"/><path d="M3.5 0.5 H7.5 V5 H10.5 L5.5 10.6 L0.5 5 H3.5Z" fill="#0a0aff"/></svg>
<div style="left:947px;top:87px;width:587px;height:553px;background:#fff;border:1px solid #d9d9d9"></div>
<div style="left:1011px;top:69px;width:58px;height:19px;background:#f0f0f0;border:1px solid #d9d9d9"></div>
<div style="left:1068px;top:69px;width:59px;height:19px;background:#f0f0f0;border:1px solid #d9d9d9"></div>
<div style="left:947px;top:67px;width:64px;height:22px;background:#fff;border:1px solid #d9d9d9;border-bottom:none"></div>
<div class="t" style="left:954px;top:69.5px;line-height:16px;">脚本程序</div>
<div class="t" style="left:1014px;top:71px;line-height:16px;">说明帮助</div>
<div class="t" style="left:1074px;top:71px;line-height:16px;">脚本说明</div>
<div class="t mono" style="left:952px;top:94px;line-height:19px;font-size:13.33px;color:#000080;white-space:pre">{</div>
<div class="t mono" style="left:952px;top:113px;line-height:19px;font-size:13.33px;color:#000080;white-space:pre">  //change_col,change_col_id,change_row_id</div>
<div class="t mono" style="left:952px;top:132px;line-height:19px;font-size:13.33px;color:#000080;white-space:pre">  return 1;</div>
<div class="t mono" style="left:952px;top:151px;line-height:19px;font-size:13.33px;color:#000080;white-space:pre">};</div>
<div class="t mono" style="left:952px;top:189px;line-height:19px;font-size:13.33px;color:#000080;white-space:pre">int obj_change()</div>
<div class="t mono" style="left:952px;top:208px;line-height:19px;font-size:13.33px;color:#000080;white-space:pre">{</div>
<div class="t mono" style="left:952px;top:227px;line-height:19px;font-size:13.33px;color:#000080;white-space:pre">  //change_obj</div>
<div class="t mono" style="left:952px;top:246px;line-height:19px;font-size:13.33px;color:#000080;white-space:pre">  return 1;</div>
<div class="t mono" style="left:952px;top:265px;line-height:19px;font-size:13.33px;color:#000080;white-space:pre">};</div>
<div class="t mono" style="left:952px;top:303px;line-height:19px;font-size:13.33px;color:#000080;white-space:pre">int init_row()</div>
<div class="t mono" style="left:952px;top:322px;line-height:19px;font-size:13.33px;color:#000080;white-space:pre">{</div>
<div class="t mono" style="left:952px;top:341px;line-height:19px;font-size:13.33px;color:#000080;white-space:pre">  dbg('init_row');</div>
<div class="t mono" style="left:952px;top:360px;line-height:19px;font-size:13.33px;color:#000080;white-space:pre">  gui_set_val(“edit_a_a”, '<span style="font-size:16px">测试单号</span>');</div>
<div class="t mono" style="left:952px;top:379px;line-height:19px;font-size:13.33px;color:#000080;white-space:pre">  return 1;</div>
<div class="t mono" style="left:952px;top:398px;line-height:19px;font-size:13.33px;color:#000080;white-space:pre">};</div>
<div style="left:1515px;top:89px;width:17px;height:551px;background:#f0f0f0"></div>
<svg style="left:1518px;top:95px" width="10" height="10"><path d="M1.4 6.8 L5 3.2 L8.6 6.8" fill="none" stroke="#505050" stroke-width="2"/></svg>
<div style="left:1516px;top:192px;width:15px;height:151px;background:#cdcdcd"></div>
<div style="left:1536px;top:68px;width:4px;height:572px;background:#a9c6ea"></div>
<div class="t lb" style="left:1546px;top:72px;line-height:16px;">类型</div>
<div style="left:1603px;top:70px;width:123px;height:20px;background:#e1e1e1;border:2px solid #f8f8f8"></div>
<div class="t" style="left:1607px;top:72.5px;line-height:16px;">全部</div>
<div style="left:1709px;top:70px;width:17px;height:19px;background:#f0f0f0;border:1px solid #a0a0a0"></div>
<svg style="left:1713px;top:78px" width="8" height="5"><path d="M0 0 H8 L4 4.5Z" fill="#000"/></svg>
<div style="left:1736px;top:74px;width:13px;height:13px;background:#fff;border:1px solid #333"></div>
<svg style="left:1737px;top:75px" width="11" height="11"><path d="M1.5 5.5 L4.2 8.5 L9.5 2" fill="none" stroke="#222" stroke-width="1.3"/></svg>
<div class="t" style="left:1751px;top:73px;line-height:16px;">隐藏不可见项目</div>
<div class="t lb" style="left:1546px;top:99px;line-height:16px;">鼠标所在</div>
<div class="in" style="left:1603px;top:99px;width:117px;height:20px;"></div>
<div class="t ser" style="left:1606px;top:100px;line-height:16px;font-size:12px"><span style="letter-spacing:-0.42px">Form_Log</span></div>
<div class="in" style="left:1724px;top:99px;width:121px;height:20px;"></div>
<div class="t ser" style="left:1727px;top:100px;line-height:16px;font-size:12px"><span style="letter-spacing:-0.42px">Form_Log</span></div>
<div style="left:1847px;top:96px;width:54px;height:23px;background:#e1e1e1;border:1px solid #adadad"></div>
<div class="t" style="left:1847px;top:99.5px;line-height:16px;width:54px;text-align:center;">定位<span style="font-size:11px;letter-spacing:-2.56px">G</span></div>
<div class="t" style="left:1546px;top:125px;line-height:16px;">控件坐标</div>
<div class="t" style="left:1763px;top:124px;line-height:16px;">鼠标坐标</div>
<div class="in" style="left:1603px;top:123px;width:35px;height:20px;"></div>
<div class="t" style="left:1606px;top:124px;line-height:16px;letter-spacing:-0.5px"><span style="font-size:11px;letter-spacing:-0.12px">65</span></div>
<div class="in" style="left:1644px;top:123px;width:35px;height:20px;"></div>
<div class="t" style="left:1647px;top:124px;line-height:16px;letter-spacing:-0.5px"><span style="font-size:11px;letter-spacing:-0.12px">0</span></div>
<div class="in" style="left:1683px;top:123px;width:35px;height:20px;"></div>
<div class="t" style="left:1686px;top:124px;line-height:16px;letter-spacing:-0.5px"><span style="font-size:11px;letter-spacing:-0.12px">144</span></div>
<div class="in" style="left:1724px;top:123px;width:35px;height:20px;"></div>
<div class="t" style="left:1727px;top:124px;line-height:16px;letter-spacing:-0.5px"><span style="font-size:11px;letter-spacing:-0.12px">23</span></div>
<div class="in" style="left:1820px;top:123px;width:35px;height:20px;"></div>
<div class="t" style="left:1823px;top:124px;line-height:16px;letter-spacing:-0.5px"><span style="font-size:11px;letter-spacing:-0.12px">447</span></div>
<div class="in" style="left:1861px;top:123px;width:35px;height:20px;"></div>
<div class="t" style="left:1864px;top:124px;line-height:16px;letter-spacing:-0.5px"><span style="font-size:11px;letter-spacing:0.70px">-13</span></div>
<div style="left:1550px;top:166px;width:1px;height:10px;background:repeating-linear-gradient(180deg,#a0a0a0 0 1px,transparent 1px 2px);width:1px"></div>
<div style="left:1550px;top:188px;width:1px;height:242px;background:repeating-linear-gradient(180deg,#a0a0a0 0 1px,transparent 1px 2px);width:1px"></div>
<div style="left:1569px;top:190px;width:1px;height:240px;background:repeating-linear-gradient(180deg,#a0a0a0 0 1px,transparent 1px 2px);width:1px"></div>
<div style="left:1588px;top:278px;width:1px;height:6px;background:repeating-linear-gradient(180deg,#a0a0a0 0 1px,transparent 1px 2px);width:1px"></div>
<div style="left:1607px;top:300px;width:1px;height:36px;background:repeating-linear-gradient(180deg,#a0a0a0 0 1px,transparent 1px 2px);width:1px"></div>
<svg style="left:1546px;top:154px" width="7" height="11"><path d="M1 1 L5.5 5.5 L1 10" fill="none" stroke="#a6a6a6" stroke-width="1.9"/></svg>
<div style="left:1555px;top:159px;width:7px;height:1px;background:repeating-linear-gradient(90deg,#a0a0a0 0 1px,transparent 1px 2px);height:1px"></div>
<div style="left:1562px;top:152.5px;width:13px;height:13.0px;background:#fff;border:1px solid #333"></div>
<div class="t seg" style="left:1582px;top:149.5px;line-height:20px;white-space:pre">Panel_Func  TPanel</div>
<svg style="left:1544px;top:177px" width="11" height="8"><path d="M1 1.5 L5.5 6 L10 1.5" fill="none" stroke="#3a3a3a" stroke-width="1.9"/></svg>
<div style="left:1555px;top:181px;width:7px;height:1px;background:repeating-linear-gradient(90deg,#a0a0a0 0 1px,transparent 1px 2px);height:1px"></div>
<div style="left:1562px;top:174.5px;width:13px;height:13.0px;background:#fff;border:1px solid #333"></div>
<div class="t seg" style="left:1582px;top:171.5px;line-height:20px;white-space:pre">Panel_Main  TPanel</div>
<svg style="left:1565px;top:198px" width="7" height="11"><path d="M1 1 L5.5 5.5 L1 10" fill="none" stroke="#a6a6a6" stroke-width="1.9"/></svg>
<div style="left:1574px;top:203px;width:7px;height:1px;background:repeating-linear-gradient(90deg,#a0a0a0 0 1px,transparent 1px 2px);height:1px"></div>
<div style="left:1581px;top:196.5px;width:13px;height:13.0px;background:#fff;border:1px solid #333"></div>
<div class="t seg" style="left:1601px;top:193.5px;line-height:20px;white-space:pre">ScrollBox_Base  TScrollBox</div>
<svg style="left:1565px;top:220px" width="7" height="11"><path d="M1 1 L5.5 5.5 L1 10" fill="none" stroke="#a6a6a6" stroke-width="1.9"/></svg>
<div style="left:1574px;top:225px;width:7px;height:1px;background:repeating-linear-gradient(90deg,#a0a0a0 0 1px,transparent 1px 2px);height:1px"></div>
<div style="left:1581px;top:218.5px;width:13px;height:13.0px;background:#fff;border:1px solid #333"></div>
<div class="t seg" style="left:1601px;top:215.5px;line-height:20px;white-space:pre">ScrollBox_Dept  TScrollBox</div>
<svg style="left:1565px;top:242px" width="7" height="11"><path d="M1 1 L5.5 5.5 L1 10" fill="none" stroke="#a6a6a6" stroke-width="1.9"/></svg>
<div style="left:1574px;top:247px;width:7px;height:1px;background:repeating-linear-gradient(90deg,#a0a0a0 0 1px,transparent 1px 2px);height:1px"></div>
<div style="left:1581px;top:241px;width:13px;height:12px;background:#fff;border:1px solid #222;border-top:3px solid #000080"></div>
<div style="left:1583px;top:246px;width:9px;height:5px;background:repeating-linear-gradient(180deg,#000080 0 1px,#fff 1px 2.5px)"></div>
<div style="left:1585px;top:244px;width:1px;height:8px;background:#fff"></div>
<div class="t seg" style="left:1601px;top:237.5px;line-height:20px;white-space:pre">MG_Sum  TMG</div>
<svg style="left:1563px;top:265px" width="11" height="8"><path d="M1 1.5 L5.5 6 L10 1.5" fill="none" stroke="#3a3a3a" stroke-width="1.9"/></svg>
<div style="left:1574px;top:269px;width:7px;height:1px;background:repeating-linear-gradient(90deg,#a0a0a0 0 1px,transparent 1px 2px);height:1px"></div>
<div style="left:1581px;top:262.5px;width:13px;height:13.0px;background:#fff;border:1px solid #333"></div>
<div class="t seg" style="left:1601px;top:259.5px;line-height:20px;white-space:pre">ScrollBox_Limit  TScrollBox</div>
<svg style="left:1582px;top:287px" width="11" height="8"><path d="M1 1.5 L5.5 6 L10 1.5" fill="none" stroke="#3a3a3a" stroke-width="1.9"/></svg>
<div style="left:1593px;top:291px;width:7px;height:1px;background:repeating-linear-gradient(90deg,#a0a0a0 0 1px,transparent 1px 2px);height:1px"></div>
<div style="left:1600px;top:284.5px;width:13px;height:13.0px;background:#fff;border:1px solid #333"></div>
<div class="t seg" style="left:1620px;top:281.5px;line-height:20px;white-space:pre">box_a_a  TScrollBox</div>
<div style="left:1608px;top:313px;width:10px;height:1px;background:repeating-linear-gradient(90deg,#a0a0a0 0 1px,transparent 1px 2px);height:1px"></div>
<div class="t" style="left:1620px;top:305px;line-height:16px;font-weight:bold;font-size:14px;color:#111">A</div>
<div class="t seg" style="left:1639px;top:303.5px;line-height:20px;white-space:pre">lab_a_a 单号 TLabel</div>
<div style="left:1616px;top:324px;width:113px;height:22px;background:#cdcdcd"></div>
<div style="left:1608px;top:335px;width:10px;height:1px;background:repeating-linear-gradient(90deg,#a0a0a0 0 1px,transparent 1px 2px);height:1px"></div>
<div style="left:1618px;top:329px;width:16px;height:11px;border-top:2px solid #222;border-left:1px solid #222"></div>
<div class="t" style="left:1619px;top:327px;line-height:16px;font-weight:bold;font-size:10px;color:#000080;letter-spacing:-0.5px"><span style="letter-spacing:0.16px">ab</span></div>
<div style="left:1632px;top:330px;width:1px;height:11px;background:#222"></div>
<div class="t seg" style="left:1639px;top:325.5px;line-height:20px;white-space:pre">edit_a_a  TEdit</div>
<svg style="left:1565px;top:352px" width="7" height="11"><path d="M1 1 L5.5 5.5 L1 10" fill="none" stroke="#a6a6a6" stroke-width="1.9"/></svg>
<div style="left:1574px;top:357px;width:7px;height:1px;background:repeating-linear-gradient(90deg,#a0a0a0 0 1px,transparent 1px 2px);height:1px"></div>
<div style="left:1581px;top:350.5px;width:13px;height:13.0px;background:#fff;border:1px solid #333"></div>
<div class="t seg" style="left:1601px;top:347.5px;line-height:20px;white-space:pre">ScrollBox_Grid  TScrollBox</div>
<svg style="left:1565px;top:374px" width="7" height="11"><path d="M1 1 L5.5 5.5 L1 10" fill="none" stroke="#a6a6a6" stroke-width="1.9"/></svg>
<div style="left:1574px;top:379px;width:7px;height:1px;background:repeating-linear-gradient(90deg,#a0a0a0 0 1px,transparent 1px 2px);height:1px"></div>
<div style="left:1581px;top:372.5px;width:13px;height:13.0px;background:#fff;border:1px solid #333"></div>
<div class="t seg" style="left:1601px;top:369.5px;line-height:20px;white-space:pre">ScrollBox_Vr_Ctl_Info  TScrollBox</div>
<div style="left:1569px;top:401px;width:12px;height:1px;background:repeating-linear-gradient(90deg,#a0a0a0 0 1px,transparent 1px 2px);height:1px"></div>
<div style="left:1581px;top:394.5px;width:13px;height:13.0px;background:#fff;border:1px solid #333"></div>
<div class="t seg" style="left:1601px;top:391.5px;line-height:20px;white-space:pre">ScrollBox_Keep_Size_Top  TScrollBox</div>
<div style="left:1569px;top:423px;width:12px;height:1px;background:repeating-linear-gradient(90deg,#a0a0a0 0 1px,transparent 1px 2px);height:1px"></div>
<div style="left:1581px;top:416.5px;width:13px;height:13.0px;background:#fff;border:1px solid #333"></div>
<div class="t seg" style="left:1601px;top:413.5px;line-height:20px;white-space:pre">ScrollBox_Keep_Size_Bottom  TScrollBox</div>
</div>
<div style="left:933px;top:430px;width:1190px;height:697px;z-index:5;background:linear-gradient(#bccad9,#c8d5e4 14px,#d8e4f1 28px,#d8e4f2);border:1px solid #5e6e86;border-radius:7px 7px 1px 1px;box-shadow:0 0 0 1px rgba(255,255,255,.35) inset"></div>
<div id="w3" style="left:0;top:0;width:2139px;height:1149px;z-index:6">
<div style="left:941px;top:461px;width:1174px;height:658px;background:#f0f0f0"></div>
<svg style="left:942px;top:441px" width="18" height="18" viewBox="0 0 18 18">
<path d="M8 5.5 H10.5 M9 5.5 V11.8 H10.6" fill="none" stroke="#8a8a8a" stroke-width="1"/>
<path d="M0.8 5 L4.8 1 L8.8 4.2 L4.6 8.2Z" fill="#f4ec00" stroke="#1a1a1a" stroke-width="1"/>
<path d="M11.4 6.6 L14.2 3.8 L16.6 5.8 L13.8 8.8Z" fill="#e0109a" stroke="#1a1a1a" stroke-width="0.9"/>
<path d="M10 13.6 L13 10.8 L15.8 13 L12.6 16.2Z" fill="#10c8d0" stroke="#1a1a1a" stroke-width="0.9"/>
</svg>
<div class="t gy" style="left:963px;top:441.5px;line-height:16px;">销售发货</div>
<div style="left:2013px;top:440px;width:31px;height:18px;border:1px solid #8f9eb8;border-radius:3px;background:linear-gradient(#d2deed,#c6d5e8 45%,#bccde3 50%,#d2e0f0)"><div style="left:9px;top:7px;width:11px;height:5px;border:1px solid #555;border-radius:1.5px;background:#e4e4e4"></div></div>
<div style="left:2047px;top:440px;width:31px;height:18px;border:1px solid #8f9eb8;border-radius:3px;background:linear-gradient(#d2deed,#c6d5e8 45%,#bccde3 50%,#d2e0f0)"><div style="left:9px;top:3px;width:11px;height:9px;border:1px solid #444;border-radius:1.5px;background:#f4f4f4"></div><div style="left:12px;top:6px;width:5px;height:3px;border:1px solid #444;background:#c8d4e4"></div></div>
<div style="left:2081px;top:440px;width:31px;height:18px;border:1px solid #8f9eb8;border-radius:3px;background:linear-gradient(#d2deed,#c6d5e8 45%,#bccde3 50%,#d2e0f0)"><svg style="left:9px;top:3px" width="12" height="10" viewBox="0 0 12 10"><path d="M1 0.7 L4.2 0.7 L6 2.9 L7.8 0.7 L11 0.7 L7.7 5 L11 9.3 L7.8 9.3 L6 7.1 L4.2 9.3 L1 9.3 L4.3 5Z" fill="#f6f6f6" stroke="#444" stroke-width="1"/></svg></div>
<div class="t b" style="left:955px;top:471.5px;line-height:16px;">前单<u class="ser" style="font-size:11px"><span style="letter-spacing:-0.72px">L</span></u></div>
<div class="t b" style="left:1008px;top:471.5px;line-height:16px;">后单<u class="ser" style="font-size:11px"><span style="letter-spacing:-1.94px">N</span></u></div>
<div class="t b" style="left:1093px;top:471.5px;line-height:16px;">功能<u class="ser" style="font-size:11px"><span style="letter-spacing:-1.94px">O</span></u></div>
<div class="t b" style="left:1147px;top:471.5px;line-height:16px;">打印<u class="ser" style="font-size:11px"><span style="letter-spacing:-0.12px">P</span></u></div>
<div class="t b" style="left:1413px;top:471.5px;line-height:16px;">审核<u class="ser" style="font-size:11px"><span style="letter-spacing:-1.34px">C</span></u></div>
<div class="t b" style="left:1485px;top:471.5px;line-height:16px;">新增<u class="ser" style="font-size:11px"><span style="letter-spacing:-1.94px">A</span></u></div>
<div class="t b" style="left:1557px;top:471.5px;line-height:16px;">保存<u class="ser" style="font-size:11px"><span style="letter-spacing:-0.12px">S</span></u></div>
<div class="t b" style="left:1629px;top:471.5px;line-height:16px;">返回<u class="ser" style="font-size:11px"><span style="letter-spacing:-1.34px">R</span></u></div>
<svg style="left:1074px;top:474px" width="12" height="13" viewBox="-1 0 12 13"><path d="M3.5 0.5 H7.5 V5 H10.5 L5.5 10.6 L0.5 5 H3.5Z" fill="#55552a" transform="translate(-0.6,0.6)"/><path d="M3.5 0.5 H7.5 V5 H10.5 L5.5 10.6 L0.5 5 H3.5Z" fill="#0a0aff"/></svg>
<svg style="left:1195px;top:472px" width="17" height="14" viewBox="0 0 17 14">
<path d="M1 9.8 L3.4 12.6 H13.2 L16 9.8" fill="none" stroke="#000" stroke-width="2" stroke-linejoin="round"/>
<path d="M4.2 4.6 H12.6 L15.8 7.2 V10 L13.2 12.2 H3.4 L1 10 V7.2Z" fill="#f8f8f8" stroke="#3a3a3a" stroke-width="0.9" stroke-linejoin="round"/>
<path d="M1.4 7.4 H15.4" stroke="#9a9a9a" stroke-width="0.7"/>
<path d="M6.2 0.6 H12 L13 4.8 H4.8Z" fill="#fff" stroke="#6a6a6a" stroke-width="0.8"/>
<path d="M7.2 1.2 L10.8 4.2 M10.8 1.2 L7.2 4.2" stroke="#e01818" stroke-width="1"/>
<rect x="8.2" y="9" width="1.1" height="1.1" fill="#e01818"/><rect x="10" y="9" width="1.1" height="1.1" fill="#e01818"/>
</svg>
<div class="t ser" style="left:948px;top:499px;line-height:26px;font-size:19px;font-weight:bold;letter-spacing:2px">销售发货</div>
<div class="t" style="left:1188px;top:508px;line-height:16px;">单据日期</div>
<div style="left:1251px;top:505px;width:145px;height:23px;background:#fff;border:1px solid #3399ff"></div>
<div class="t" style="left:1253px;top:508.5px;line-height:16px;color:#000;letter-spacing:-0.6px"><span style="background:#3399ff;color:#fff">2022</span>-11-10</div>
<svg style="left:1367px;top:510.5px" width="12" height="13" viewBox="0 0 12 13"><rect x="2" y="2" width="9" height="10" rx="1" fill="#c8c8c8"/><rect x="0.5" y="0.5" width="9" height="10" rx="1" fill="#fafafa" stroke="#8a8a8a"/><path d="M2.5 3.5 H7.5 M2.5 5.5 H7.5 M2.5 7.5 H7.5 M3.5 2.5 V8.5 M5.5 2.5 V8.5" stroke="#9a9a9a" stroke-width="1" fill="none"/></svg>
<svg style="left:1381px;top:514.5px" width="8" height="5"><path d="M0 0 H8 L4 4.5Z" fill="#3a5a9a"/></svg>
<div class="t" style="left:1433px;top:508px;line-height:16px;">单据编号</div>
<div class="in" style="left:1496px;top:505px;width:145px;height:20px;"></div>
<div class="t" style="left:1499px;top:507px;line-height:16px;"><span style="font-size:11px;letter-spacing:0.39px">BB-22-11-10-0001</span></div>
<div class="t" style="left:943px;top:543px;line-height:16px;">客户</div>
<div style="left:1006px;top:541px;width:128px;height:19px;background:#e6f5fb;border:2px solid #fff;border-bottom:1px solid #e6e6e6"></div>
<div style="left:1134px;top:541px;width:17px;height:19px;background:#f2f2f2;border:1px solid #9a9a9a"></div>
<svg style="left:1139px;top:548.5px" width="8" height="5"><path d="M0 0 H8 L4 4.5Z" fill="#000"/></svg>
<div class="t" style="left:1009px;top:542.5px;line-height:16px;">华东捷波装饰</div>
<div style="left:1158px;top:554px;width:2px;height:1px;background:#1a44c0"></div>
<div style="left:1164px;top:554px;width:2px;height:1px;background:#1a44c0"></div>
<div class="t" style="left:1188px;top:543px;line-height:16px;">联系人</div>
<div style="left:1251px;top:541px;width:128px;height:19px;background:#fff;border-bottom:1px solid #e4e4e4"></div>
<div style="left:1379px;top:541px;width:17px;height:19px;background:#f2f2f2;border:1px solid #9a9a9a"></div>
<svg style="left:1384px;top:548.5px" width="8" height="5"><path d="M0 0 H8 L4 4.5Z" fill="#000"/></svg>
<div class="t" style="left:1254px;top:542.5px;line-height:16px;">无</div>
<div class="t" style="left:1433px;top:543px;line-height:16px;">联系电话</div>
<div style="left:1496px;top:541px;width:128px;height:19px;background:#fff;border-bottom:1px solid #e4e4e4"></div>
<div style="left:1624px;top:541px;width:17px;height:19px;background:#f2f2f2;border:1px solid #9a9a9a"></div>
<svg style="left:1629px;top:548.5px" width="8" height="5"><path d="M0 0 H8 L4 4.5Z" fill="#000"/></svg>
<svg style="left:1643px;top:543.5px" width="19" height="18" viewBox="0 0 19 18">
<path d="M11.5 16 Q14.8 17.8 17.6 15.2" fill="none" stroke="#9a9aa2" stroke-width="1.2"/>
<path d="M2.8 5 Q3.2 10.5 8.6 14.6" fill="none" stroke="#b88a00" stroke-width="3.6" stroke-linecap="round"/>
<ellipse cx="4.4" cy="3.4" rx="3.5" ry="2.6" transform="rotate(-32 4.4 3.4)" fill="#b88a00"/>
<ellipse cx="10.2" cy="14" rx="3.3" ry="2.6" transform="rotate(38 10.2 14)" fill="#b88a00"/>
<path d="M2.8 5 Q3.2 10.5 8.6 14.6" fill="none" stroke="#f7d708" stroke-width="2.3" stroke-linecap="round"/>
<ellipse cx="4.4" cy="3.4" rx="2.8" ry="1.9" transform="rotate(-32 4.4 3.4)" fill="#f7d708"/>
<ellipse cx="10.2" cy="14" rx="2.6" ry="1.9" transform="rotate(38 10.2 14)" fill="#f7d708"/>
<path d="M2.2 2.6 Q4.4 0.8 6.6 2" fill="none" stroke="#f08a28" stroke-width="1.3" stroke-linecap="round"/>
<path d="M8.2 12.2 Q9.6 11.6 10.8 12.4" fill="none" stroke="#f0a030" stroke-width="1" stroke-linecap="round"/>
</svg>
<div class="t" style="left:1679px;top:543px;line-height:16px;">传真电话</div>
<div style="left:1741px;top:541px;width:128px;height:19px;background:#fff;border-bottom:1px solid #e4e4e4"></div>
<div style="left:1869px;top:541px;width:17px;height:19px;background:#f2f2f2;border:1px solid #9a9a9a"></div>
<svg style="left:1874px;top:548.5px" width="8" height="5"><path d="M0 0 H8 L4 4.5Z" fill="#000"/></svg>
<svg style="left:1888px;top:543.5px" width="19" height="18" viewBox="0 0 19 18">
<path d="M11.5 16 Q14.8 17.8 17.6 15.2" fill="none" stroke="#9a9aa2" stroke-width="1.2"/>
<path d="M2.8 5 Q3.2 10.5 8.6 14.6" fill="none" stroke="#b88a00" stroke-width="3.6" stroke-linecap="round"/>
<ellipse cx="4.4" cy="3.4" rx="3.5" ry="2.6" transform="rotate(-32 4.4 3.4)" fill="#b88a00"/>
<ellipse cx="10.2" cy="14" rx="3.3" ry="2.6" transform="rotate(38 10.2 14)" fill="#b88a00"/>
<path d="M2.8 5 Q3.2 10.5 8.6 14.6" fill="none" stroke="#f7d708" stroke-width="2.3" stroke-linecap="round"/>
<ellipse cx="4.4" cy="3.4" rx="2.8" ry="1.9" transform="rotate(-32 4.4 3.4)" fill="#f7d708"/>
<ellipse cx="10.2" cy="14" rx="2.6" ry="1.9" transform="rotate(38 10.2 14)" fill="#f7d708"/>
<path d="M2.2 2.6 Q4.4 0.8 6.6 2" fill="none" stroke="#f08a28" stroke-width="1.3" stroke-linecap="round"/>
<path d="M8.2 12.2 Q9.6 11.6 10.8 12.4" fill="none" stroke="#f0a030" stroke-width="1" stroke-linecap="round"/>
</svg>
<div class="t" style="left:943px;top:568px;line-height:16px;">企业地址</div>
<div style="left:1006px;top:566px;width:128px;height:19px;background:#fff;border-bottom:1px solid #e4e4e4"></div>
<div style="left:1134px;top:566px;width:17px;height:19px;background:#f2f2f2;border:1px solid #9a9a9a"></div>
<svg style="left:1139px;top:573.5px" width="8" height="5"><path d="M0 0 H8 L4 4.5Z" fill="#000"/></svg>
<svg style="left:1155px;top:570px" width="16" height="16" viewBox="0 0 16 16">
<circle cx="7.2" cy="7.2" r="6.6" fill="#f6f6f6" stroke="#8c8c8c" stroke-width="0.9"/>
<path d="M6.5 1.6 L8 0.9 L12 1.2 L13 2.8 L11.5 3.6 L9 3 L7 3.4Z" fill="#0a0aee"/>
<path d="M8.2 1.6 L10.6 1.4 L10.2 2.8 L8.6 2.6Z" fill="#0a8a2a"/>
<path d="M4.4 3.6 L6.2 3.2 L6.2 5 L5.4 6.2 L6.2 7 L4.6 7.4 L2.6 6.6 L4.2 5.6Z" fill="#0a0aee"/>
<path d="M4.6 3.6 L6 3.4 L6 4.8 L4.8 5Z M5.2 6.4 L6.2 6.4 L6 7.2 L5 7.2Z" fill="#0a8a2a"/>
<path d="M1.2 8.2 L2.2 8.6 L1.8 9.2Z" fill="#109090"/>
<path d="M2.4 9.8 L7.2 8.8 L7.2 14 L5.6 13.6 L3.6 11.8Z" fill="#0a0aee"/>
<rect x="7.4" y="4.6" width="7.8" height="10.2" fill="#ffffff"/>
<path d="M7.4 14.9 H15.3 V7" fill="none" stroke="#b0b0b0" stroke-width="0.8"/>
<g fill="#f6f000"><rect x="8" y="5.2" width="1" height="1"/><rect x="10" y="4.8" width="1" height="1"/><rect x="10" y="6.4" width="1" height="1"/><rect x="8" y="7.4" width="1" height="1"/><rect x="8" y="11.4" width="1" height="1"/><rect x="8" y="13.4" width="1" height="1"/><rect x="10" y="12.6" width="1" height="1"/><rect x="12" y="13.4" width="1" height="1"/></g>
<circle cx="10.8" cy="9.6" r="2.5" fill="#0a0ae0" stroke="#108888" stroke-width="0.8"/>
<path d="M9.6 8.6 L11.4 8.2 L10.4 9.8Z" fill="#f4f4f4"/><path d="M10.6 9.4 L12 8.2 L12.2 9Z" fill="#0a8a2a"/>
</svg>
<div class="t" style="left:1188px;top:568px;line-height:16px;">操作仓库</div>
<div style="left:1251px;top:566px;width:128px;height:19px;background:#e6f5fb;border:2px solid #fff;border-bottom:1px solid #e6e6e6"></div>
<div style="left:1379px;top:566px;width:17px;height:19px;background:#f2f2f2;border:1px solid #9a9a9a"></div>
<svg style="left:1384px;top:573.5px" width="8" height="5"><path d="M0 0 H8 L4 4.5Z" fill="#000"/></svg>
<div style="left:1403px;top:579px;width:2px;height:1px;background:#1a44c0"></div>
<div style="left:1409px;top:579px;width:2px;height:1px;background:#1a44c0"></div>
<div class="t" style="left:1433px;top:568px;line-height:16px;">交付期限</div>
<div style="left:1496px;top:567px;width:145px;height:23px;background:#fff;border:1px solid #ababab"></div>
<div class="t" style="left:1498px;top:570.5px;line-height:16px;color:#000;letter-spacing:-0.6px"><span style="font-size:11px;letter-spacing:0.45px">2022-11-04</span></div>
<svg style="left:1612px;top:572.5px" width="12" height="13" viewBox="0 0 12 13"><rect x="2" y="2" width="9" height="10" rx="1" fill="#c8c8c8"/><rect x="0.5" y="0.5" width="9" height="10" rx="1" fill="#fafafa" stroke="#8a8a8a"/><path d="M2.5 3.5 H7.5 M2.5 5.5 H7.5 M2.5 7.5 H7.5 M3.5 2.5 V8.5 M5.5 2.5 V8.5" stroke="#9a9a9a" stroke-width="1" fill="none"/></svg>
<svg style="left:1626px;top:576.5px" width="8" height="5"><path d="M0 0 H8 L4 4.5Z" fill="#3a5a9a"/></svg>
<div class="t" style="left:1679px;top:568px;line-height:16px;">结算期限</div>
<div style="left:1741px;top:567px;width:145px;height:23px;background:#fff;border:1px solid #ababab"></div>
<div class="t" style="left:1743px;top:570.5px;line-height:16px;color:#000;letter-spacing:-0.6px"><span style="font-size:11px;letter-spacing:0.45px">2022-11-04</span></div>
<svg style="left:1857px;top:572.5px" width="12" height="13" viewBox="0 0 12 13"><rect x="2" y="2" width="9" height="10" rx="1" fill="#c8c8c8"/><rect x="0.5" y="0.5" width="9" height="10" rx="1" fill="#fafafa" stroke="#8a8a8a"/><path d="M2.5 3.5 H7.5 M2.5 5.5 H7.5 M2.5 7.5 H7.5 M3.5 2.5 V8.5 M5.5 2.5 V8.5" stroke="#9a9a9a" stroke-width="1" fill="none"/></svg>
<svg style="left:1871px;top:576.5px" width="8" height="5"><path d="M0 0 H8 L4 4.5Z" fill="#3a5a9a"/></svg>
<div class="t" style="left:943px;top:591px;line-height:16px;">单号</div>
<div class="in" style="left:1006px;top:590px;width:144px;height:23px;"></div>
<div style="left:941px;top:620px;width:1174px;height:419px;background:#fff"></div>
<div style="left:941px;top:620px;width:1052px;height:24px;background:#f0f0f0"></div>
<div style="left:941px;top:620px;width:49px;height:24px;background:#f7e6ef"></div>
<div style="left:990px;top:644px;width:1003px;height:25px;background:#ccffff"></div>
<div style="left:941px;top:644px;width:49px;height:25px;background:#f0f0f0"></div>
<div class="t n" style="left:941px;top:649px;line-height:16px;width:49px;text-align:center;letter-spacing:-0.5px"><span style="font-size:11px;letter-spacing:-0.12px">1</span></div>
<div style="left:990px;top:669px;width:1003px;height:25px;background:#fffffb"></div>
<div style="left:941px;top:669px;width:49px;height:25px;background:#f0f0f0"></div>
<div class="t n" style="left:941px;top:674px;line-height:16px;width:49px;text-align:center;letter-spacing:-0.5px"><span style="font-size:11px;letter-spacing:-0.12px">2</span></div>
<div style="left:990px;top:694px;width:1003px;height:25px;background:#f5fefe"></div>
<div style="left:941px;top:694px;width:49px;height:25px;background:#f0f0f0"></div>
<div class="t n" style="left:941px;top:699px;line-height:16px;width:49px;text-align:center;letter-spacing:-0.5px"><span style="font-size:11px;letter-spacing:-0.12px">3</span></div>
<div style="left:990px;top:719px;width:1003px;height:25px;background:#fffffb"></div>
<div style="left:941px;top:719px;width:49px;height:25px;background:#f0f0f0"></div>
<div class="t n" style="left:941px;top:724px;line-height:16px;width:49px;text-align:center;letter-spacing:-0.5px"><span style="font-size:11px;letter-spacing:-0.12px">4</span></div>
<div style="left:990px;top:744px;width:1003px;height:25px;background:#f5fefe"></div>
<div style="left:941px;top:744px;width:49px;height:25px;background:#f0f0f0"></div>
<div class="t n" style="left:941px;top:749px;line-height:16px;width:49px;text-align:center;letter-spacing:-0.5px"><span style="font-size:11px;letter-spacing:-0.12px">5</span></div>
<div style="left:990px;top:769px;width:1003px;height:25px;background:#fffffb"></div>
<div style="left:941px;top:769px;width:49px;height:25px;background:#f0f0f0"></div>
<div class="t n" style="left:941px;top:774px;line-height:16px;width:49px;text-align:center;letter-spacing:-0.5px"><span style="font-size:11px;letter-spacing:-0.12px">6</span></div>
<div style="left:990px;top:794px;width:1003px;height:25px;background:#f5fefe"></div>
<div style="left:941px;top:794px;width:49px;height:25px;background:#f0f0f0"></div>
<div class="t n" style="left:941px;top:799px;line-height:16px;width:49px;text-align:center;letter-spacing:-0.5px"><span style="font-size:11px;letter-spacing:-0.12px">7</span></div>
<div style="left:990px;top:819px;width:1003px;height:25px;background:#fffffb"></div>
<div style="left:941px;top:819px;width:49px;height:25px;background:#f0f0f0"></div>
<div class="t n" style="left:941px;top:824px;line-height:16px;width:49px;text-align:center;letter-spacing:-0.5px"><span style="font-size:11px;letter-spacing:-0.12px">8</span></div>
<div style="left:990px;top:844px;width:1003px;height:25px;background:#f5fefe"></div>
<div style="left:941px;top:844px;width:49px;height:25px;background:#f0f0f0"></div>
<div class="t n" style="left:941px;top:849px;line-height:16px;width:49px;text-align:center;letter-spacing:-0.5px"><span style="font-size:11px;letter-spacing:-0.12px">9</span></div>
<div style="left:990px;top:869px;width:1003px;height:25px;background:#fffffb"></div>
<div style="left:941px;top:869px;width:49px;height:25px;background:#f0f0f0"></div>
<div class="t n" style="left:941px;top:874px;line-height:16px;width:49px;text-align:center;letter-spacing:-0.5px"><span style="font-size:11px;letter-spacing:-0.12px">10</span></div>
<div style="left:990px;top:894px;width:1003px;height:25px;background:#f5fefe"></div>
<div style="left:941px;top:894px;width:49px;height:25px;background:#f0f0f0"></div>
<div class="t n" style="left:941px;top:899px;line-height:16px;width:49px;text-align:center;letter-spacing:-0.5px"><span style="font-size:11px;letter-spacing:0.29px">11</span></div>
<div style="left:990px;top:919px;width:1003px;height:25px;background:#fffffb"></div>
<div style="left:941px;top:919px;width:49px;height:25px;background:#f0f0f0"></div>
<div class="t n" style="left:941px;top:924px;line-height:16px;width:49px;text-align:center;letter-spacing:-0.5px"><span style="font-size:11px;letter-spacing:-0.12px">12</span></div>
<div style="left:990px;top:944px;width:1003px;height:25px;background:#f5fefe"></div>
<div style="left:941px;top:944px;width:49px;height:25px;background:#f0f0f0"></div>
<div class="t n" style="left:941px;top:949px;line-height:16px;width:49px;text-align:center;letter-spacing:-0.5px"><span style="font-size:11px;letter-spacing:-0.12px">13</span></div>
<div style="left:990px;top:969px;width:1003px;height:25px;background:#fffffb"></div>
<div style="left:941px;top:969px;width:49px;height:25px;background:#f0f0f0"></div>
<div class="t n" style="left:941px;top:974px;line-height:16px;width:49px;text-align:center;letter-spacing:-0.5px"><span style="font-size:11px;letter-spacing:-0.12px">14</span></div>
<div style="left:990px;top:998px;width:1003px;height:24px;background:#fffffb"></div>
<div style="left:941px;top:998px;width:49px;height:24px;background:#f7e6ef"></div>
<div style="left:991px;top:645px;width:99px;height:24px;background:#5564ee"></div>
<div class="t n" style="left:941px;top:624.5px;line-height:16px;width:49px;text-align:center;"><span style="font-size:11px;letter-spacing:2.34px">-</span></div>
<div class="t n" style="left:990px;top:624.5px;line-height:16px;width:100px;text-align:center;">产品编号</div>
<div class="t n" style="left:1090px;top:624.5px;line-height:16px;width:180px;text-align:center;">产品名称</div>
<div class="t n" style="left:1270px;top:624.5px;line-height:16px;width:40px;text-align:center;">单位</div>
<div class="t n" style="left:1310px;top:624.5px;line-height:16px;width:50px;text-align:center;">数量</div>
<div class="t n" style="left:1360px;top:624.5px;line-height:16px;width:60px;text-align:center;">单价</div>
<div class="t n" style="left:1420px;top:624.5px;line-height:16px;width:70px;text-align:center;">金额</div>
<div class="t n" style="left:1490px;top:624.5px;line-height:16px;width:50px;text-align:center;">折扣<span style="font-size:11px;letter-spacing:-3.78px">%</span></div>
<div class="t n" style="left:1540px;top:624.5px;line-height:16px;width:70px;text-align:center;">折后金额</div>
<div class="t n" style="left:1610px;top:624.5px;line-height:16px;width:45px;text-align:center;">税率<span style="font-size:11px;letter-spacing:-3.78px">%</span></div>
<div class="t n" style="left:1655px;top:624.5px;line-height:16px;width:55px;text-align:center;">税额</div>
<div class="t n" style="left:1710px;top:624.5px;line-height:16px;width:102px;text-align:center;">合计金额</div>
<div class="t n" style="left:1812px;top:624.5px;line-height:16px;width:100px;text-align:center;">备注</div>
<div class="t n" style="left:1912px;top:624.5px;line-height:16px;width:80px;text-align:center;">审后备注</div>
<div style="left:1720px;top:644px;width:1px;height:350px;background:#8c8c8c"></div>
<div style="left:1720px;top:998px;width:1px;height:24px;background:#8c8c8c"></div>
<div style="left:1729px;top:644px;width:1px;height:350px;background:#8c8c8c"></div>
<div style="left:1729px;top:998px;width:1px;height:24px;background:#8c8c8c"></div>
<div style="left:1738px;top:644px;width:1px;height:350px;background:#000"></div>
<div style="left:1738px;top:998px;width:1px;height:24px;background:#000"></div>
<div style="left:1747px;top:644px;width:1px;height:350px;background:#8c8c8c"></div>
<div style="left:1747px;top:998px;width:1px;height:24px;background:#8c8c8c"></div>
<div style="left:1756px;top:644px;width:1px;height:350px;background:#8c8c8c"></div>
<div style="left:1756px;top:998px;width:1px;height:24px;background:#8c8c8c"></div>
<div style="left:1765px;top:644px;width:1px;height:350px;background:#000"></div>
<div style="left:1765px;top:998px;width:1px;height:24px;background:#000"></div>
<div style="left:1774px;top:644px;width:1px;height:350px;background:#8c8c8c"></div>
<div style="left:1774px;top:998px;width:1px;height:24px;background:#8c8c8c"></div>
<div style="left:1783px;top:644px;width:1px;height:350px;background:#8c8c8c"></div>
<div style="left:1783px;top:998px;width:1px;height:24px;background:#8c8c8c"></div>
<div style="left:1792px;top:644px;width:1px;height:350px;background:#ee1111"></div>
<div style="left:1792px;top:998px;width:1px;height:24px;background:#ee1111"></div>
<div style="left:1801px;top:644px;width:1px;height:350px;background:#8c8c8c"></div>
<div style="left:1801px;top:998px;width:1px;height:24px;background:#8c8c8c"></div>
<div class="hl" style="left:941px;top:620px;width:1052px"></div>
<div class="hl" style="left:941px;top:644px;width:1052px"></div>
<div class="hl" style="left:941px;top:669px;width:1052px"></div>
<div class="hl" style="left:941px;top:694px;width:1052px"></div>
<div class="hl" style="left:941px;top:719px;width:1052px"></div>
<div class="hl" style="left:941px;top:744px;width:1052px"></div>
<div class="hl" style="left:941px;top:769px;width:1052px"></div>
<div class="hl" style="left:941px;top:794px;width:1052px"></div>
<div class="hl" style="left:941px;top:819px;width:1052px"></div>
<div class="hl" style="left:941px;top:844px;width:1052px"></div>
<div class="hl" style="left:941px;top:869px;width:1052px"></div>
<div class="hl" style="left:941px;top:894px;width:1052px"></div>
<div class="hl" style="left:941px;top:919px;width:1052px"></div>
<div class="hl" style="left:941px;top:944px;width:1052px"></div>
<div class="hl" style="left:941px;top:969px;width:1052px"></div>
<div class="hl" style="left:941px;top:994px;width:1052px"></div>
<div class="hl" style="left:941px;top:998px;width:1052px"></div>
<div class="hl" style="left:941px;top:1022px;width:1052px"></div>
<div class="vl" style="left:941px;top:620px;height:403px"></div>
<div class="vl" style="left:990px;top:620px;height:403px"></div>
<div class="vl" style="left:1090px;top:620px;height:403px"></div>
<div class="vl" style="left:1270px;top:620px;height:403px"></div>
<div class="vl" style="left:1310px;top:620px;height:403px"></div>
<div class="vl" style="left:1360px;top:620px;height:403px"></div>
<div class="vl" style="left:1420px;top:620px;height:403px"></div>
<div class="vl" style="left:1490px;top:620px;height:403px"></div>
<div class="vl" style="left:1540px;top:620px;height:403px"></div>
<div class="vl" style="left:1610px;top:620px;height:403px"></div>
<div class="vl" style="left:1655px;top:620px;height:403px"></div>
<div class="vl" style="left:1710px;top:620px;height:403px"></div>
<div class="vl" style="left:1812px;top:620px;height:403px"></div>
<div class="vl" style="left:1912px;top:620px;height:403px"></div>
<div class="vl" style="left:1992px;top:620px;height:403px"></div>
<div class="t ser" style="left:994px;top:649px;line-height:16px;color:#fff;letter-spacing:0.35px;font-size:12px"><span style="letter-spacing:1.04px">bijiben_a</span></div>
<div class="t" style="left:1095px;top:649px;line-height:16px;letter-spacing:-0.3px"><span style="font-size:11px;letter-spacing:2.94px">I</span>型笔记本电脑<span style="font-size:11px;letter-spacing:0.37px">-IBM T42</span></div>
<div class="t" style="left:1275px;top:649px;line-height:16px;letter-spacing:-0.3px">个</div>
<div class="t" style="left:1310px;top:649px;line-height:16px;width:50px;text-align:right;letter-spacing:-0.6px;padding-right:4px"><span style="font-size:11px;letter-spacing:-0.12px">1</span></div>
<div class="t" style="left:1360px;top:649px;line-height:16px;width:60px;text-align:right;letter-spacing:-0.6px;padding-right:4px"><span style="font-size:11px;letter-spacing:-0.12px">17380</span></div>
<div class="t" style="left:1420px;top:649px;line-height:16px;width:70px;text-align:right;letter-spacing:-0.6px;padding-right:4px"><span style="font-size:11px;letter-spacing:-0.12px">17380</span></div>
<div class="t" style="left:1490px;top:649px;line-height:16px;width:50px;text-align:right;letter-spacing:-0.6px;padding-right:4px"><span style="font-size:11px;letter-spacing:-0.12px">100</span></div>
<div class="t" style="left:1540px;top:649px;line-height:16px;width:70px;text-align:right;letter-spacing:-0.6px;padding-right:4px"><span style="font-size:11px;letter-spacing:-0.12px">17380</span></div>
<div class="t" style="left:1610px;top:649px;line-height:16px;width:45px;text-align:right;letter-spacing:-0.6px;padding-right:4px"><span style="font-size:11px;letter-spacing:-0.12px">0</span></div>
<div class="t" style="left:1655px;top:649px;line-height:16px;width:55px;text-align:right;letter-spacing:-0.6px;padding-right:4px"><span style="font-size:11px;letter-spacing:-0.12px">0</span></div>
<div class="t ser" style="left:1747px;top:649px;line-height:16px;width:9px;text-align:center;color:#0000ee;font-weight:bold;font-size:13px"><span style="letter-spacing:-0.50px">1</span></div>
<div class="t" style="left:1756px;top:649px;line-height:16px;width:9px;text-align:center;color:#000;font-weight:normal;font-size:12px"><span style="font-size:11px;letter-spacing:-0.12px">7</span></div>
<div class="t" style="left:1765px;top:649px;line-height:16px;width:9px;text-align:center;color:#000;font-weight:normal;font-size:12px"><span style="font-size:11px;letter-spacing:-0.12px">3</span></div>
<div class="t" style="left:1774px;top:649px;line-height:16px;width:9px;text-align:center;color:#000;font-weight:normal;font-size:12px"><span style="font-size:11px;letter-spacing:-0.12px">8</span></div>
<div class="t" style="left:1783px;top:649px;line-height:16px;width:9px;text-align:center;color:#000;font-weight:normal;font-size:12px"><span style="font-size:11px;letter-spacing:-0.12px">0</span></div>
<div class="t" style="left:1792px;top:649px;line-height:16px;width:9px;text-align:center;color:#ee1111;font-weight:normal;font-size:12px"><span style="font-size:11px;letter-spacing:-0.12px">0</span></div>
<div class="t" style="left:1801px;top:649px;line-height:16px;width:9px;text-align:center;color:#ee1111;font-weight:normal;font-size:12px"><span style="font-size:11px;letter-spacing:-0.12px">0</span></div>
<div class="t" style="left:995px;top:1002.5px;line-height:16px;letter-spacing:-0.3px">合计<span style="font-size:11px;letter-spacing:1.41px"> 1</span></div>
<div class="t" style="left:1310px;top:1002.5px;line-height:16px;width:50px;text-align:right;letter-spacing:-0.6px;padding-right:4px"><span style="font-size:11px;letter-spacing:-0.12px">1</span></div>
<div class="t" style="left:1420px;top:1002.5px;line-height:16px;width:70px;text-align:right;letter-spacing:-0.6px;padding-right:4px"><span style="font-size:11px;letter-spacing:-0.12px">17380</span></div>
<div class="t" style="left:1540px;top:1002.5px;line-height:16px;width:70px;text-align:right;letter-spacing:-0.6px;padding-right:4px"><span style="font-size:11px;letter-spacing:-0.12px">17380</span></div>
<div class="t" style="left:1655px;top:1002.5px;line-height:16px;width:55px;text-align:right;letter-spacing:-0.6px;padding-right:4px"><span style="font-size:11px;letter-spacing:-0.12px">0</span></div>
<div class="t ser" style="left:1747px;top:1002.5px;line-height:16px;width:9px;text-align:center;color:#0000ee;font-weight:bold;font-size:13px"><span style="letter-spacing:-0.50px">1</span></div>
<div class="t" style="left:1756px;top:1002.5px;line-height:16px;width:9px;text-align:center;color:#000;font-weight:normal;font-size:12px"><span style="font-size:11px;letter-spacing:-0.12px">7</span></div>
<div class="t" style="left:1765px;top:1002.5px;line-height:16px;width:9px;text-align:center;color:#000;font-weight:normal;font-size:12px"><span style="font-size:11px;letter-spacing:-0.12px">3</span></div>
<div class="t" style="left:1774px;top:1002.5px;line-height:16px;width:9px;text-align:center;color:#000;font-weight:normal;font-size:12px"><span style="font-size:11px;letter-spacing:-0.12px">8</span></div>
<div class="t" style="left:1783px;top:1002.5px;line-height:16px;width:9px;text-align:center;color:#000;font-weight:normal;font-size:12px"><span style="font-size:11px;letter-spacing:-0.12px">0</span></div>
<div class="t" style="left:1792px;top:1002.5px;line-height:16px;width:9px;text-align:center;color:#ee1111;font-weight:normal;font-size:12px"><span style="font-size:11px;letter-spacing:-0.12px">0</span></div>
<div class="t" style="left:1801px;top:1002.5px;line-height:16px;width:9px;text-align:center;color:#ee1111;font-weight:normal;font-size:12px"><span style="font-size:11px;letter-spacing:-0.12px">0</span></div>
<div style="left:941px;top:995px;width:1052px;height:3px;background:#fff"></div>
<div class="vl" style="left:941px;top:995px;height:3px"></div>
<div class="vl" style="left:990px;top:995px;height:3px"></div>
<div class="vl" style="left:1090px;top:995px;height:3px"></div>
<div class="vl" style="left:1270px;top:995px;height:3px"></div>
<div class="vl" style="left:1310px;top:995px;height:3px"></div>
<div class="vl" style="left:1360px;top:995px;height:3px"></div>
<div class="vl" style="left:1420px;top:995px;height:3px"></div>
<div class="vl" style="left:1490px;top:995px;height:3px"></div>
<div class="vl" style="left:1540px;top:995px;height:3px"></div>
<div class="vl" style="left:1610px;top:995px;height:3px"></div>
<div class="vl" style="left:1655px;top:995px;height:3px"></div>
<div class="vl" style="left:1710px;top:995px;height:3px"></div>
<div class="vl" style="left:1812px;top:995px;height:3px"></div>
<div class="vl" style="left:1912px;top:995px;height:3px"></div>
<div class="vl" style="left:1992px;top:995px;height:3px"></div>
<div style="left:1720px;top:995px;width:1px;height:3px;background:#8c8c8c"></div>
<div style="left:1729px;top:995px;width:1px;height:3px;background:#8c8c8c"></div>
<div style="left:1738px;top:995px;width:1px;height:3px;background:#000"></div>
<div style="left:1747px;top:995px;width:1px;height:3px;background:#8c8c8c"></div>
<div style="left:1756px;top:995px;width:1px;height:3px;background:#8c8c8c"></div>
<div style="left:1765px;top:995px;width:1px;height:3px;background:#000"></div>
<div style="left:1774px;top:995px;width:1px;height:3px;background:#8c8c8c"></div>
<div style="left:1783px;top:995px;width:1px;height:3px;background:#8c8c8c"></div>
<div style="left:1792px;top:995px;width:1px;height:3px;background:#ee1111"></div>
<div style="left:1801px;top:995px;width:1px;height:3px;background:#8c8c8c"></div>
<div style="left:2099px;top:620px;width:16px;height:377px;background:#f0f0f0"></div>
<svg style="left:2102px;top:624px" width="10" height="10"><path d="M1.4 6.8 L5 3.2 L8.6 6.8" fill="none" stroke="#505050" stroke-width="2"/></svg>
<svg style="left:2102px;top:984px" width="10" height="10"><path d="M1.4 2.6 L5 6.2 L8.6 2.6" fill="none" stroke="#505050" stroke-width="2"/></svg>
<div style="left:2099px;top:637px;width:15px;height:17px;background:#cdcdcd"></div>
<div class="t" style="left:948px;top:1045px;line-height:16px;">业务部</div>
<div style="left:1008px;top:1044px;width:88px;height:18px;background:#e6f5fb;border:2px solid #f8fcfe"></div>
<div style="left:1097px;top:1044px;width:17px;height:18px;background:#f2f2f2;border:1px solid #9a9a9a"></div>
<svg style="left:1102px;top:1051px" width="8" height="5"><path d="M0 0 H8 L4 4.5Z" fill="#000"/></svg>
<div class="t" style="left:1011px;top:1045px;line-height:16px;">销售部</div>
<div class="t" style="left:1120px;top:1045px;line-height:16px;">业务员</div>
<div style="left:1177px;top:1044px;width:69px;height:18px;background:#e6f5fb;border:2px solid #f8fcfe"></div>
<div style="left:1247px;top:1044px;width:17px;height:18px;background:#f2f2f2;border:1px solid #9a9a9a"></div>
<svg style="left:1252px;top:1051px" width="8" height="5"><path d="M0 0 H8 L4 4.5Z" fill="#000"/></svg>
<div class="t" style="left:1180px;top:1045px;line-height:16px;">余学前</div>
<div style="left:1276px;top:1057px;width:2px;height:1px;background:#1a44c0"></div>
<div style="left:1282px;top:1057px;width:2px;height:1px;background:#1a44c0"></div>
<div class="t" style="left:1304px;top:1045px;line-height:16px;">制单</div>
<div class="t g" style="left:1361px;top:1046px;line-height:16px;">系统管理员</div>
<div class="t g" style="left:1442px;top:1045px;line-height:16px;letter-spacing:-0.6px"><span style="font-size:11px;letter-spacing:0.45px">2022-11-10</span></div>
<div class="t" style="left:1524px;top:1045px;line-height:16px;">审核</div>
<div class="t" style="left:948px;top:1071px;line-height:16px;">备注</div>
<div style="left:1008px;top:1069px;width:694px;height:23px;background:#fff;border:1px solid #7a7a7a"></div>
<div style="left:1684px;top:1071px;width:16px;height:19px;background:#f0f0f0"></div>
<svg style="left:1687px;top:1072px" width="10" height="10"><path d="M1.4 6.8 L5 3.2 L8.6 6.8" fill="none" stroke="#c0c0c0" stroke-width="2"/></svg>
<svg style="left:1687px;top:1080px" width="10" height="10"><path d="M1.4 2.6 L5 6.2 L8.6 2.6" fill="none" stroke="#c0c0c0" stroke-width="2"/></svg>
<svg style="left:950px;top:1097px" width="14" height="17" viewBox="0 0 14 17">
<path d="M0.5 0.5 H9.5 L12.5 3.5 V15.5 H0.5Z" fill="#fff" stroke="#000" stroke-width="1"/>
<path d="M9.5 0.5 V3.5 H12.5" fill="none" stroke="#000" stroke-width="0.6"/>
<path d="M3.6 8 A3 3 0 0 1 8.4 5.6 M9.4 9 A3 3 0 0 1 4.6 11.4" fill="none" stroke="#0a8a0a" stroke-width="1.5"/>
<path d="M7.2 3.6 L10.4 5.8 L7.2 7.6Z M5.8 9.4 L2.6 11.2 L5.8 13.4Z" fill="#0a8a0a"/>
</svg>
<div class="t b" style="left:974px;top:1096.5px;line-height:16px;">业务</div>
<div class="t g" style="left:1025px;top:1096.5px;line-height:16px;">库存<span style="position:relative;top:-6px;font-size:11px">~~</span></div>
<div class="t g" style="left:1090px;top:1096.5px;line-height:16px;">销售量</div>
<div class="t g" style="left:1276px;top:1096.5px;line-height:16px;">虚拟库影响</div>
</div>
<div style="left:327px;top:641px;width:600px;height:400px;z-index:7;background:linear-gradient(#98b4d6,#b3cbe7 26px,#bad1eb 32px,#bcd3ec);border:1px solid #3c5a80;border-radius:7px 7px 1px 1px;box-shadow:0 0 0 1px rgba(255,255,255,.35) inset"></div>
<div id="w4" style="left:0;top:0;width:2139px;height:1149px;z-index:8">
<div style="left:335px;top:672px;width:584px;height:361px;background:#fff;border:1px solid #8a9ab2"></div>
<svg style="left:337px;top:651px" width="18" height="18" viewBox="0 0 18 18">
<path d="M8 5.5 H10.5 M9 5.5 V11.8 H10.6" fill="none" stroke="#8a8a8a" stroke-width="1"/>
<path d="M0.8 5 L4.8 1 L8.8 4.2 L4.6 8.2Z" fill="#f4ec00" stroke="#1a1a1a" stroke-width="1"/>
<path d="M11.4 6.6 L14.2 3.8 L16.6 5.8 L13.8 8.8Z" fill="#e0109a" stroke="#1a1a1a" stroke-width="0.9"/>
<path d="M10 13.6 L13 10.8 L15.8 13 L12.6 16.2Z" fill="#10c8d0" stroke="#1a1a1a" stroke-width="0.9"/>
</svg>
<div class="t" style="left:357px;top:652.5px;line-height:16px;color:#000">信息窗口</div>
<div style="left:817px;top:651px;width:31px;height:18px;border:1px solid #6a7a96;border-radius:2.5px;box-shadow:0 0 0 1px rgba(255,255,255,.55) inset;background:linear-gradient(#c4d4ea,#b4c8e2 46%,#9db4d2 50%,#b4cae4)"><div style="left:9px;top:7px;width:11px;height:5px;border:1px solid #555;border-radius:1.5px;background:#e4e4e4"></div></div>
<div style="left:851px;top:651px;width:31px;height:18px;border:1px solid #6a7a96;border-radius:2.5px;box-shadow:0 0 0 1px rgba(255,255,255,.55) inset;background:linear-gradient(#c4d4ea,#b4c8e2 46%,#9db4d2 50%,#b4cae4)"><div style="left:9px;top:3px;width:11px;height:9px;border:1px solid #444;border-radius:1.5px;background:#f4f4f4"></div><div style="left:12px;top:6px;width:5px;height:3px;border:1px solid #444;background:#c8d4e4"></div></div>
<div style="left:885px;top:651px;width:31px;height:18px;border:1px solid #5a2a2a;border-radius:3px;background:linear-gradient(#e8a898,#d0685a 45%,#c03828 50%,#d86a50)"><svg style="left:9px;top:3px" width="12" height="10" viewBox="0 0 12 10"><path d="M1 0.7 L4.2 0.7 L6 2.9 L7.8 0.7 L11 0.7 L7.7 5 L11 9.3 L7.8 9.3 L6 7.1 L4.2 9.3 L1 9.3 L4.3 5Z" fill="#f6f6f6" stroke="#444" stroke-width="1"/></svg></div>
<div class="t ser" style="left:338px;top:675px;line-height:16px;font-size:12px"><span style="letter-spacing:0.92px">init_row</span></div>
</div>
<div id="ann" style="left:0;top:0;width:2139px;height:1149px;z-index:20">
<svg width="2139" height="1149" style="left:0;top:0">
<rect x="329" y="639" width="596" height="2" fill="#9fd4f8"/>
<polygon points="401.0,562.0 461.8,600.4 463.1,594.9 472.0,610.3 454.4,607.7 459.1,604.4" fill="#f43b3b"/>
<polygon points="947.0,361.0 418.5,677.0 421.9,678.7 404.4,680.6 414.5,666.2 414.4,670.0" fill="#f43b3b"/>
<polygon points="1186.0,388.0 1122.8,584.9 1128.2,584.6 1115.5,597.2 1113.0,579.5 1117.1,583.0" fill="#f43b3b"/>
<circle cx="361.8" cy="517.8" r="9.8" fill="#f43b3b"/>
<circle cx="1101" cy="331" r="9.8" fill="#f43b3b"/>
<circle cx="1270.8" cy="367.9" r="9.8" fill="#f43b3b"/>
<path d="M1115.5 331.3 L1120 326.5 V336Z" fill="#333" fill-opacity="0.75"/>
<path d="M1285.5 367.8 L1290 363 V372.6Z" fill="#333" fill-opacity="0.75"/>
</svg>
<div class="t" style="left:351.8px;top:509.8px;line-height:16px;width:20px;text-align:center;color:#fff;font-size:13px"><span style="letter-spacing:-1.23px">1</span></div>
<div class="t" style="left:1091px;top:323px;line-height:16px;width:20px;text-align:center;color:#fff;font-size:13px"><span style="letter-spacing:-1.23px">2</span></div>
<div class="t" style="left:1260.8px;top:359.9px;line-height:16px;width:20px;text-align:center;color:#fff;font-size:13px"><span style="letter-spacing:-1.23px">3</span></div>
<div style="left:1120px;top:314px;width:123px;height:34px;background:rgba(51,51,51,0.75);border-radius:4px"></div>
<div class="t" style="left:1126px;top:320px;line-height:22px;color:#fff;font-size:16px;letter-spacing:0">有效, 被触发了</div>
<div style="left:1290px;top:351px;width:264px;height:166px;background:rgba(51,51,51,0.75);border-radius:4px"></div>
<div class="t" style="left:1296px;top:357.5px;line-height:22px;color:#fff;font-size:16px;letter-spacing:0">这一句不起作用, 赋值不了</div>
<div class="t" style="left:1296px;top:401.5px;line-height:22px;color:#fff;font-size:16px;letter-spacing:0">在客户实际应用场景中, 是写</div>
<div class="t" style="left:1296px;top:423.5px;line-height:22px;color:#fff;font-size:16px;letter-spacing:0"><span style="letter-spacing:0.2px">gui_set_val('edit_a_a', batch_no);</span></div>
<div class="t" style="left:1296px;top:445.5px;line-height:22px;color:#fff;font-size:16px;letter-spacing:0">将批次写到表头中</div>
<div class="t" style="left:1296px;top:489.5px;line-height:22px;color:#fff;font-size:16px;letter-spacing:0">主要是 <span style="letter-spacing:0.2px">gui_set_val()</span> 不起作用.</div>
</div>
</body></html>
